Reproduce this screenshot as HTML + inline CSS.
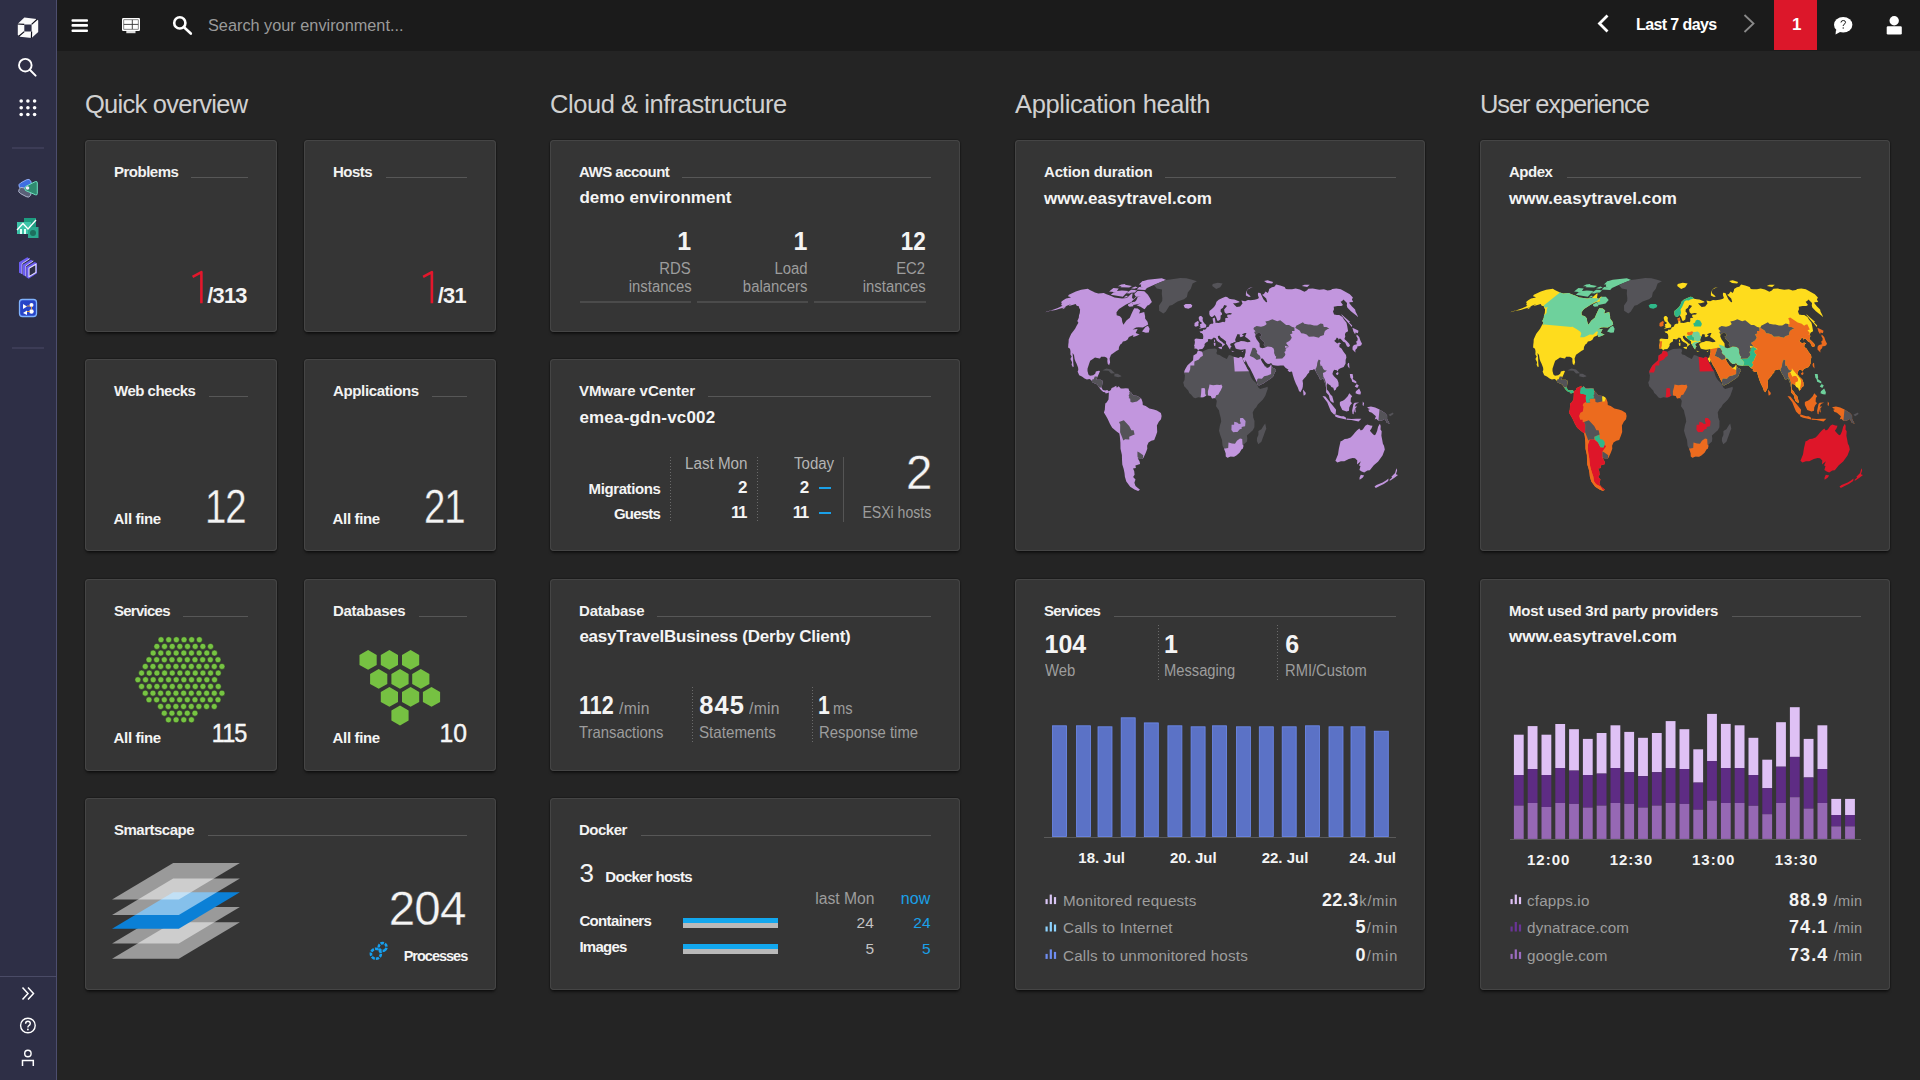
<!DOCTYPE html>
<html><head><meta charset="utf-8">
<style>
*{box-sizing:border-box}
html,body{margin:0;padding:0}
body{width:1920px;height:1080px;overflow:hidden;position:relative;background:#242424;font-family:"Liberation Sans",sans-serif;color:#fff}
.a{position:absolute;white-space:nowrap}
.x{position:absolute;white-space:nowrap;line-height:1}
#sb{position:absolute;left:0;top:0;width:57px;height:1080px;background:#2e2f46;border-right:1px solid #4d4e6e}
#tb{position:absolute;left:57px;top:0;width:1863px;height:51px;background:#1b1b1b}
.h{position:absolute;top:92.4px;font-size:25.5px;line-height:25.5px;color:#d0d0d0;letter-spacing:-0.7px}
.card{position:absolute;background:#353535;border-radius:4px;box-shadow:inset 0 0 0 1px #454545,0 0 1px 1px rgba(0,0,0,.22),0 3px 3px -1px rgba(0,0,0,.5)}
.r1{top:140px}.r2{top:359px}.r3{top:579px}.r4{top:798px}
.cA{left:85px;width:192px}.cB{left:304px;width:192px}.cC{left:550px;width:410px}.cD{left:1015px;width:410px}.cE{left:1480px;width:410px}
.s{height:192px}
.t{position:absolute;left:29px;top:24px;font-size:15px;line-height:15px;font-weight:bold;letter-spacing:-0.5px;color:#f2f2f2}
.ln{position:absolute;height:1px;top:37px;right:29px;background:#575757}
</style></head><body>
<div id="sb">
<svg class="a" style="left:0;top:0" width="56" height="1080" viewBox="0 0 56 1080">
 <!-- logo -->
 <path d="M24.4 17.6 L36.5 19.0 L38.2 20.4 L38.2 32.1 L31.6 37.9 L20 36.7 L17.8 35.1 L17.8 23.8 Z M24.3 24.4 L24.3 31.6 L31.6 31.6 L31.6 24.4 Z" fill="#fafafa" fill-rule="evenodd"/>
 <path d="M17.5 24.0 L24.3 24.4 M31.6 24.4 L37.2 19.2 M31.6 31.6 L31.4 38 M24.3 31.6 L18.8 36.2" stroke="#0d0d1a" stroke-width="1.2" fill="none"/>
 <!-- search -->
 <circle cx="25.3" cy="65.2" r="6.3" stroke="#fff" stroke-width="1.9" fill="none"/>
 <path d="M29.8 69.8 L35.6 75.6" stroke="#fff" stroke-width="2" stroke-linecap="round"/>
 <!-- dots -->
 <g fill="#fff"><circle cx="21.2" cy="101" r="1.8"/><circle cx="27.9" cy="101" r="1.8"/><circle cx="34.6" cy="101" r="1.8"/><circle cx="21.2" cy="107.8" r="1.8"/><circle cx="27.9" cy="107.8" r="1.8"/><circle cx="34.6" cy="107.8" r="1.8"/><circle cx="21.2" cy="114.5" r="1.8"/><circle cx="27.9" cy="114.5" r="1.8"/><circle cx="34.6" cy="114.5" r="1.8"/></g>
 <rect x="12" y="147.5" width="32" height="1" fill="#4a4b66"/>
 <rect x="12" y="347.5" width="32" height="1" fill="#4a4b66"/>
 <!-- icon1 -->
 <rect x="18.5" y="181" width="13" height="6.5" rx="3.2" transform="rotate(-28 25 184)" fill="#3f6fe0" stroke="#9cb7ff" stroke-width="0.8"/>
 <rect x="18.5" y="189" width="13" height="6.5" rx="3.2" transform="rotate(28 25 192)" fill="#5a6078" stroke="#b9bfd8" stroke-width="0.8"/>
 <path d="M25.5 186.5 L35.5 181.5 Q37.3 181 37.3 183 L37.3 193.5 Q37.3 195.5 35.5 194.8 L25.5 190.5 Q24 188.5 25.5 186.5Z" fill="#2f8a70" stroke="#6fe0c0" stroke-width="1"/>
 <circle cx="27.5" cy="188" r="1.8" fill="#f3e9ff"/>
 <!-- icon2 -->
 <rect x="24" y="218" width="12" height="12" fill="#1d9c80"/>
 <rect x="17" y="222" width="14" height="12" fill="#3cc3a8"/>
 <rect x="28" y="227" width="10.5" height="11" fill="#2aa88e"/>
 <path d="M17 230 L23 223.5 L28 229 L36 220" stroke="#fff" stroke-width="1.3" fill="none"/>
 <rect x="20" y="229" width="2" height="5" fill="#dffff6"/><rect x="24" y="229" width="2" height="5" fill="#dffff6"/>
 <circle cx="33" cy="233" r="3" fill="#1d6e5e"/>
 <!-- icon3 -->
 <path d="M19 262.3 L27.3 257.3 L29.7 258.7 L22 263.7 L22 274 L19 272.7Z" fill="#6b5cf2"/>
 <path d="M22 263.7 L29.7 258.7" stroke="#e3ddff" stroke-width="0.8"/><path d="M22 263.7 L22 274" stroke="#cfc7ff" stroke-width="0.8"/>
 <path d="M22.7 264.7 L31 259.7 L33.3 261 L25.7 266 L25.7 276.3 L22.7 275Z" fill="#6b5cf2"/>
 <path d="M25.7 266 L33.3 261" stroke="#e3ddff" stroke-width="0.8"/><path d="M25.7 266 L25.7 276.3" stroke="#cfc7ff" stroke-width="0.8"/>
 <path d="M26.3 267 L34.7 262 L37 263.3 L37 273.3 L28.7 278.7 L26.3 277.3Z" fill="#6b5cf2"/>
 <path d="M29 268.3 L35.9 264.2 L35.9 272.5 L29 276.6Z" fill="#2e2f46" stroke="#e6e2ff" stroke-width="1.1"/>
 <!-- icon4 -->
 <rect x="19.5" y="299.5" width="17" height="17" rx="3" fill="#2744c8" stroke="#7fb2ff" stroke-width="1.3"/>
 <path d="M23 304 L27 306.5 L23 309Z M23 313 L27 310.5 L27 315Z" fill="#fff"/>
 <circle cx="31.5" cy="305" r="2" fill="#fff"/><circle cx="31.5" cy="311.5" r="2.2" fill="#fff"/>
 <path d="M27 306 L30 306 M27 311.5 L30 311.5 M31.5 306.5 L31.5 309.5" stroke="#f0a030" stroke-width="0.9"/>
 <!-- bottom -->
 <rect x="0" y="976" width="56" height="1" fill="#4a4b66"/>
 <path d="M22.5 987.5 L28 993.5 L22.5 999.5 M28 987.5 L33.5 993.5 L28 999.5" stroke="#fff" stroke-width="1.5" fill="none"/>
 <circle cx="27.9" cy="1025.5" r="7.3" stroke="#fff" stroke-width="1.4" fill="none"/>
 <path d="M25.6 1023.8 Q25.6 1021.3 27.9 1021.3 Q30.3 1021.3 30.3 1023.6 Q30.3 1025 28.6 1025.8 Q27.9 1026.3 27.9 1027.5" stroke="#fff" stroke-width="1.4" fill="none"/>
 <circle cx="27.9" cy="1029.5" r="0.9" fill="#fff"/>
 <circle cx="27.9" cy="1053.5" r="3.2" stroke="#fff" stroke-width="1.4" fill="none"/>
 <path d="M22.5 1066 L22.5 1060.5 L33.3 1060.5 L33.3 1066" stroke="#fff" stroke-width="1.5" fill="none"/>
</svg>
</div>
<div id="tb">
<svg class="a" style="left:0;top:0" width="1863" height="50" viewBox="57 0 1863 50">
 <g fill="#fff"><rect x="71.5" y="19.2" width="16.5" height="2.6" rx="1"/><rect x="71.5" y="24.1" width="16.5" height="2.6" rx="1"/><rect x="71.5" y="29.4" width="16.5" height="2.6" rx="1"/></g>
 <rect x="122" y="18" width="18" height="13" rx="1.2" fill="#fff"/>
 <rect x="123.8" y="19.8" width="14.4" height="9.4" fill="none" stroke="#3a3a3a" stroke-width="0.6"/>
 <path d="M123.8 24.4 L138.2 24.4 M132.3 19.8 L132.3 29.2" stroke="#333" stroke-width="0.9"/>
 <rect x="126.3" y="31" width="9.2" height="2.2" fill="#ddd"/>
 <circle cx="179.8" cy="22.9" r="5.6" stroke="#fff" stroke-width="2.6" fill="none"/>
 <path d="M184 27.3 L190.8 33.5" stroke="#fff" stroke-width="2.6" stroke-linecap="round"/>
 <path d="M1607.5 15.5 L1599.5 23.5 L1607.5 31.5" stroke="#fff" stroke-width="2.8" fill="none"/>
 <path d="M1744.5 15 L1753.5 23.5 L1744.5 32" stroke="#8a8a8a" stroke-width="1.8" fill="none"/>
 <rect x="1774" y="0" width="43" height="50" fill="#dc172a"/>
 <ellipse cx="1843.2" cy="24.7" rx="9.2" ry="7.8" fill="#fff"/>
 <path d="M1836 30 L1835.5 34.5 L1841 31.5Z" fill="#fff"/>
 <path d="M1841 22.5 Q1841 20.5 1843.3 20.5 Q1845.5 20.5 1845.5 22.3 Q1845.5 23.6 1844 24.3 Q1843.2 24.8 1843.2 26" stroke="#1b1b1b" stroke-width="1" fill="none"/>
 <circle cx="1843.2" cy="28" r="0.7" fill="#1b1b1b"/>
 <circle cx="1894.2" cy="20.8" r="4.7" fill="#fff"/>
 <rect x="1886.7" y="26.3" width="15.1" height="8.3" rx="1.3" fill="#fff"/>
</svg>
<div class="a" style="left:151px;top:16.8px;font-size:16.3px;line-height:16px;color:#9a9a9a">Search your environment...</div>
<div class="a" style="left:1579px;top:17px;font-size:16px;line-height:16px;font-weight:bold;color:#fff;letter-spacing:-0.6px">Last 7 days</div>
<div class="a" style="left:1735px;top:16px;font-size:17px;line-height:17px;font-weight:bold;color:#fff">1</div>
</div>

<div class="h" style="left:85px;letter-spacing:-0.75px">Quick overview</div>
<div class="h" style="left:550px;letter-spacing:-0.45px">Cloud &amp; infrastructure</div>
<div class="h" style="left:1015px;letter-spacing:-0.35px">Application health</div>
<div class="h" style="left:1480px;letter-spacing:-1.13px">User experience</div>

<div class="card cA r1 s"><div class="t">Problems</div><div class="ln" style="left:106px"></div></div>
<div class="card cB r1 s"><div class="t">Hosts</div><div class="ln" style="left:82px"></div></div>
<div class="card cA r2 s"><div class="t">Web checks</div><div class="ln" style="left:124px"></div></div>
<div class="card cB r2 s"><div class="t" style="letter-spacing:-0.35px">Applications</div><div class="ln" style="left:128px"></div></div>
<div class="card cA r3 s"><div class="t" style="letter-spacing:-0.75px">Services</div><div class="ln" style="left:98px"></div></div>
<div class="card cB r3 s"><div class="t" style="letter-spacing:-0.3px">Databases</div><div class="ln" style="left:115px"></div></div>
<div class="card cA r4 s" style="width:411px"><div class="t">Smartscape</div><div class="ln" style="left:123px"></div></div>

<div class="card cC r1 s"><div class="t">AWS account</div><div class="ln" style="left:132px"></div></div>
<div class="card cC r2 s"><div class="t" style="letter-spacing:-0.04px">VMware vCenter</div><div class="ln" style="left:158px"></div></div>
<div class="card cC r3 s"><div class="t" style="letter-spacing:-0.15px">Database</div><div class="ln" style="left:107px"></div></div>
<div class="card cC r4 s"><div class="t">Docker</div><div class="ln" style="left:91px"></div></div>

<div class="card cD r1" style="height:411px"><div class="t" style="letter-spacing:-0.15px">Action duration</div><div class="ln" style="left:150px"></div></div>
<div class="card cD r3" style="height:411px"><div class="t" style="letter-spacing:-0.7px">Services</div><div class="ln" style="left:99px"></div></div>
<div class="card cE r1" style="height:411px"><div class="t">Apdex</div><div class="ln" style="left:87px"></div></div>
<div class="card cE r3" style="height:411px"><div class="t" style="letter-spacing:-0.2px">Most used 3rd party providers</div><div class="ln" style="left:252px"></div></div>

<!--CONTENT_START--><div class="x" style="top:285.0px;font-size:21.8px;color:#f4f4f4;font-weight:bold;letter-spacing:-0.75px;left:207.3px;">/313</div>
<div class="x" style="top:285.0px;font-size:21.8px;color:#f4f4f4;font-weight:bold;letter-spacing:-0.75px;left:437.8px;">/31</div>
<div class="x" style="top:510.9px;font-size:15px;color:#f4f4f4;font-weight:bold;letter-spacing:-0.35px;left:113.6px;">All fine</div>
<div class="x" style="top:483.0px;font-size:48px;color:#f4f4f4;letter-spacing:-1.5px;right:1673.5px;transform:scaleX(0.8);transform-origin:100% 0;margin-right:1.5px;-webkit-text-stroke:0.35px #353535;">12</div>
<div class="x" style="top:510.9px;font-size:15px;color:#f4f4f4;font-weight:bold;letter-spacing:-0.35px;left:332.6px;">All fine</div>
<div class="x" style="top:483.0px;font-size:48px;color:#f4f4f4;letter-spacing:-1.5px;right:1454.0px;transform:scaleX(0.8);transform-origin:100% 0;margin-right:1.5px;-webkit-text-stroke:0.35px #353535;">21</div>
<div class="x" style="top:729.5px;font-size:15px;color:#f4f4f4;font-weight:bold;letter-spacing:-0.35px;left:113.6px;">All fine</div>
<div class="x" style="top:720.2px;font-size:26px;color:#f4f4f4;letter-spacing:-1px;right:1672.5px;transform:scaleX(0.9);transform-origin:100% 0;margin-right:1px;-webkit-text-stroke:0.4px #fff;">115</div>
<div class="x" style="top:729.5px;font-size:15px;color:#f4f4f4;font-weight:bold;letter-spacing:-0.35px;left:332.6px;">All fine</div>
<div class="x" style="top:720.2px;font-size:26px;color:#f4f4f4;right:1453.5px;transform:scaleX(0.95);transform-origin:100% 0;-webkit-text-stroke:0.4px #fff;">10</div>
<div class="x" style="top:885.4px;font-size:47.5px;color:#f4f4f4;letter-spacing:-0.8px;right:1453.7px;margin-right:0.8px;-webkit-text-stroke:0.35px #353535;">204</div>
<div class="x" style="top:948.6px;font-size:14.5px;color:#f4f4f4;font-weight:bold;letter-spacing:-1.0px;left:403.7px;">Processes</div>
<div class="x" style="top:189.4px;font-size:17px;color:#f4f4f4;font-weight:bold;left:579.4px;">demo environment</div>
<div class="x" style="top:229.1px;font-size:25px;color:#f4f4f4;font-weight:bold;right:1228.8px;">1</div>
<div class="x" style="top:260.9px;font-size:16px;color:#9d9d9d;right:1228.8px;transform:scaleX(0.93);transform-origin:100% 0;">RDS</div>
<div class="x" style="top:279.2px;font-size:16px;color:#9d9d9d;right:1228.8px;transform:scaleX(0.93);transform-origin:100% 0;">instances</div>
<div class="x" style="top:229.1px;font-size:25px;color:#f4f4f4;font-weight:bold;right:1112.6px;">1</div>
<div class="x" style="top:260.9px;font-size:16px;color:#9d9d9d;right:1112.6px;transform:scaleX(0.93);transform-origin:100% 0;">Load</div>
<div class="x" style="top:279.2px;font-size:16px;color:#9d9d9d;right:1112.6px;transform:scaleX(0.93);transform-origin:100% 0;">balancers</div>
<div class="x" style="top:229.1px;font-size:25px;color:#f4f4f4;font-weight:bold;right:994.6px;transform:scaleX(0.9);transform-origin:100% 0;">12</div>
<div class="x" style="top:260.9px;font-size:16px;color:#9d9d9d;right:994.6px;transform:scaleX(0.93);transform-origin:100% 0;">EC2</div>
<div class="x" style="top:279.2px;font-size:16px;color:#9d9d9d;right:994.6px;transform:scaleX(0.93);transform-origin:100% 0;">instances</div>
<div class="x" style="left:580.0px;top:301.0px;width:111.0px;height:2.0px;background:#4b4b4b;"></div>
<div class="x" style="left:697.0px;top:301.0px;width:111.0px;height:2.0px;background:#4b4b4b;"></div>
<div class="x" style="left:814.0px;top:301.0px;width:112.0px;height:2.0px;background:#4b4b4b;"></div>
<div class="x" style="top:408.9px;font-size:17px;color:#f4f4f4;font-weight:bold;letter-spacing:0.2px;left:579.4px;">emea-gdn-vc002</div>
<div class="x" style="top:455.7px;font-size:16px;color:#b4b4b4;left:685.3px;transform:scaleX(0.95);transform-origin:0 0;">Last Mon</div>
<div class="x" style="top:455.7px;font-size:16px;color:#b4b4b4;left:793.9px;transform:scaleX(0.94);transform-origin:0 0;">Today</div>
<div class="x" style="top:481.0px;font-size:15px;color:#f4f4f4;font-weight:bold;letter-spacing:-0.4px;right:1259.2px;margin-right:0.4px;">Migrations</div>
<div class="x" style="top:505.7px;font-size:15px;color:#f4f4f4;font-weight:bold;letter-spacing:-0.8px;right:1259.2px;margin-right:0.8px;">Guests</div>
<div class="x" style="top:479.3px;font-size:17px;color:#f4f4f4;font-weight:bold;right:1172.6px;">2</div>
<div class="x" style="top:504.0px;font-size:17px;color:#f4f4f4;font-weight:bold;letter-spacing:-1.5px;right:1172.6px;margin-right:1.5px;">11</div>
<div class="x" style="top:479.3px;font-size:17px;color:#f4f4f4;font-weight:bold;right:1110.8px;">2</div>
<div class="x" style="top:504.0px;font-size:17px;color:#f4f4f4;font-weight:bold;letter-spacing:-1.5px;right:1110.8px;margin-right:1.5px;">11</div>
<div class="x" style="left:819.0px;top:486.6px;width:11.6px;height:2.2px;background:#1aa0e8;"></div>
<div class="x" style="left:819.0px;top:511.8px;width:11.6px;height:2.2px;background:#1aa0e8;"></div>
<div class="x" style="left:670.0px;top:457.0px;width:1px;height:65.0px;background:repeating-linear-gradient(#6a6a6a 0 1px,transparent 1px 3px)"></div>
<div class="x" style="left:756.5px;top:457.0px;width:1px;height:65.0px;background:repeating-linear-gradient(#6a6a6a 0 1px,transparent 1px 3px)"></div>
<div class="x" style="left:842.5px;top:457.0px;width:1.0px;height:65.0px;background:#555;"></div>
<div class="x" style="top:448.6px;font-size:47.5px;color:#f4f4f4;right:987.7px;-webkit-text-stroke:0.35px #353535;">2</div>
<div class="x" style="top:504.9px;font-size:16px;color:#9d9d9d;right:988.6px;transform:scaleX(0.88);transform-origin:100% 0;">ESXi hosts</div>
<div class="x" style="top:627.8px;font-size:17px;color:#f4f4f4;font-weight:bold;letter-spacing:-0.23px;left:579.4px;">easyTravelBusiness (Derby Client)</div>
<div class="x" style="top:693.2px;font-size:25px;color:#f4f4f4;font-weight:bold;left:579.4px;transform:scaleX(0.86);transform-origin:0 0;">112</div>
<div class="x" style="top:700.9px;font-size:16px;color:#9d9d9d;letter-spacing:0.3px;left:619.0px;transform:scaleX(0.98);transform-origin:0 0;">/min</div>
<div class="x" style="top:724.4px;font-size:16.5px;color:#9d9d9d;left:579.4px;transform:scaleX(0.9);transform-origin:0 0;">Transactions</div>
<div class="x" style="top:692.8px;font-size:25.5px;color:#f4f4f4;font-weight:bold;letter-spacing:1.1px;left:699.3px;">845</div>
<div class="x" style="top:700.9px;font-size:16px;color:#9d9d9d;letter-spacing:0.3px;left:749.0px;transform:scaleX(0.98);transform-origin:0 0;">/min</div>
<div class="x" style="top:724.4px;font-size:16.5px;color:#9d9d9d;left:699.3px;transform:scaleX(0.92);transform-origin:0 0;">Statements</div>
<div class="x" style="top:693.2px;font-size:25px;color:#f4f4f4;font-weight:bold;left:818.4px;transform:scaleX(0.85);transform-origin:0 0;">1</div>
<div class="x" style="top:700.9px;font-size:16px;color:#9d9d9d;left:833.3px;transform:scaleX(0.92);transform-origin:0 0;">ms</div>
<div class="x" style="top:724.4px;font-size:16.5px;color:#9d9d9d;left:819.0px;transform:scaleX(0.9);transform-origin:0 0;">Response time</div>
<div class="x" style="left:692.4px;top:687.0px;width:1px;height:55.0px;background:repeating-linear-gradient(#6a6a6a 0 1px,transparent 1px 3px)"></div>
<div class="x" style="left:812.0px;top:687.0px;width:1px;height:55.0px;background:repeating-linear-gradient(#6a6a6a 0 1px,transparent 1px 3px)"></div>
<div class="x" style="top:859.7px;font-size:26px;color:#f4f4f4;left:579.4px;">3</div>
<div class="x" style="top:869.0px;font-size:15px;color:#f4f4f4;font-weight:bold;letter-spacing:-0.7px;left:605.3px;">Docker hosts</div>
<div class="x" style="top:891.1px;font-size:16px;color:#9d9d9d;right:1045.4px;transform:scaleX(0.98);transform-origin:100% 0;">last Mon</div>
<div class="x" style="top:891.1px;font-size:16px;color:#1aa0e8;right:989.8px;">now</div>
<div class="x" style="top:913.0px;font-size:15px;color:#f4f4f4;font-weight:bold;letter-spacing:-0.65px;left:579.4px;">Containers</div>
<div class="x" style="top:938.8px;font-size:15px;color:#f4f4f4;font-weight:bold;letter-spacing:-0.75px;left:579.4px;">Images</div>
<div class="x" style="left:682.5px;top:918.3px;width:95.1px;height:4.6px;background:#12a7ee;"></div>
<div class="x" style="left:682.5px;top:922.9px;width:95.1px;height:5.0px;background:#b9b9b9;"></div>
<div class="x" style="left:682.5px;top:944.3px;width:95.1px;height:4.6px;background:#12a7ee;"></div>
<div class="x" style="left:682.5px;top:948.9px;width:95.1px;height:5.0px;background:#b9b9b9;"></div>
<div class="x" style="top:915.1px;font-size:15.5px;color:#c4c4c4;letter-spacing:0.3px;right:1046.0px;margin-right:-0.3px;">24</div>
<div class="x" style="top:915.1px;font-size:15.5px;color:#1aa0e8;letter-spacing:0.3px;right:989.3px;margin-right:-0.3px;">24</div>
<div class="x" style="top:941.4px;font-size:15.5px;color:#c4c4c4;right:1046.0px;">5</div>
<div class="x" style="top:941.4px;font-size:15.5px;color:#1aa0e8;right:989.3px;">5</div>
<div class="x" style="top:189.6px;font-size:17px;color:#f4f4f4;font-weight:bold;letter-spacing:0.08px;left:1044.0px;">www.easytravel.com</div>
<div class="x" style="top:189.6px;font-size:17px;color:#f4f4f4;font-weight:bold;letter-spacing:0.08px;left:1509.0px;">www.easytravel.com</div>
<div class="x" style="top:632.3px;font-size:25px;color:#f4f4f4;font-weight:bold;left:1044.5px;">104</div>
<div class="x" style="top:632.3px;font-size:25px;color:#f4f4f4;font-weight:bold;left:1163.9px;">1</div>
<div class="x" style="top:632.3px;font-size:25px;color:#f4f4f4;font-weight:bold;left:1285.3px;">6</div>
<div class="x" style="top:662.5px;font-size:16px;color:#9d9d9d;left:1044.5px;transform:scaleX(0.93);transform-origin:0 0;">Web</div>
<div class="x" style="top:662.5px;font-size:16px;color:#9d9d9d;left:1164.0px;transform:scaleX(0.92);transform-origin:0 0;">Messaging</div>
<div class="x" style="top:662.5px;font-size:16px;color:#9d9d9d;left:1285.0px;transform:scaleX(0.92);transform-origin:0 0;">RMI/Custom</div>
<div class="x" style="left:1157.8px;top:625.0px;width:1px;height:55.0px;background:repeating-linear-gradient(#6a6a6a 0 1px,transparent 1px 3px)"></div>
<div class="x" style="left:1276.7px;top:625.0px;width:1px;height:55.0px;background:repeating-linear-gradient(#6a6a6a 0 1px,transparent 1px 3px)"></div>
<div class="x" style="left:1044.0px;top:836.5px;width:352.0px;height:1.5px;background:#5a5a5a;"></div>
<div class="x" style="top:849.8px;font-size:15px;color:#f4f4f4;font-weight:bold;left:1078.3px;">18. Jul</div>
<div class="x" style="top:849.8px;font-size:15px;color:#f4f4f4;font-weight:bold;left:1170.0px;">20. Jul</div>
<div class="x" style="top:849.8px;font-size:15px;color:#f4f4f4;font-weight:bold;left:1261.7px;">22. Jul</div>
<div class="x" style="top:849.8px;font-size:15px;color:#f4f4f4;font-weight:bold;left:1349.3px;">24. Jul</div>
<div class="x" style="top:893.0px;font-size:15.5px;color:#9d9d9d;letter-spacing:0.2px;left:1062.5px;transform:scaleX(0.98);transform-origin:0 0;">Monitored requests</div>
<div class="x" style="top:920.4px;font-size:15.5px;color:#9d9d9d;letter-spacing:0.2px;left:1062.5px;transform:scaleX(0.98);transform-origin:0 0;">Calls to Internet</div>
<div class="x" style="top:947.8px;font-size:15.5px;color:#9d9d9d;letter-spacing:0.2px;left:1062.5px;transform:scaleX(0.98);transform-origin:0 0;">Calls to unmonitored hosts</div>
<div class="x" style="top:890.9px;font-size:18px;color:#f4f4f4;font-weight:bold;letter-spacing:0.4px;right:561.8px;margin-right:-0.4px;">22.3</div>
<div class="x" style="top:893.8px;font-size:14.5px;color:#9d9d9d;letter-spacing:0.8px;right:522.8px;margin-right:-0.8px;">k/min</div>
<div class="x" style="top:918.4px;font-size:18px;color:#f4f4f4;font-weight:bold;right:554.4px;">5</div>
<div class="x" style="top:921.3px;font-size:14.5px;color:#9d9d9d;letter-spacing:1.0px;right:522.8px;margin-right:-1.0px;">/min</div>
<div class="x" style="top:945.7px;font-size:18px;color:#f4f4f4;font-weight:bold;right:554.4px;">0</div>
<div class="x" style="top:948.6px;font-size:14.5px;color:#9d9d9d;letter-spacing:1.0px;right:522.8px;margin-right:-1.0px;">/min</div>
<div class="x" style="top:628.1px;font-size:17px;color:#f4f4f4;font-weight:bold;letter-spacing:0.08px;left:1509.0px;">www.easytravel.com</div>
<div class="x" style="left:1509.5px;top:838.6px;width:351.0px;height:1.5px;background:#5a5a5a;"></div>
<div class="x" style="top:851.9px;font-size:15px;color:#f4f4f4;font-weight:bold;letter-spacing:1.0px;left:1527.0px;">12:00</div>
<div class="x" style="top:851.9px;font-size:15px;color:#f4f4f4;font-weight:bold;letter-spacing:1.0px;left:1609.7px;">12:30</div>
<div class="x" style="top:851.9px;font-size:15px;color:#f4f4f4;font-weight:bold;letter-spacing:1.0px;left:1692.0px;">13:00</div>
<div class="x" style="top:851.9px;font-size:15px;color:#f4f4f4;font-weight:bold;letter-spacing:1.0px;left:1774.7px;">13:30</div>
<div class="x" style="top:893.0px;font-size:15.5px;color:#9d9d9d;letter-spacing:0.2px;left:1527.0px;transform:scaleX(0.98);transform-origin:0 0;">cfapps.io</div>
<div class="x" style="top:890.9px;font-size:18px;color:#f4f4f4;font-weight:bold;letter-spacing:1.1px;right:92.7px;margin-right:-1.1px;">88.9</div>
<div class="x" style="top:893.8px;font-size:14.5px;color:#9d9d9d;letter-spacing:0.25px;right:58.0px;margin-right:-0.25px;">/min</div>
<div class="x" style="top:920.4px;font-size:15.5px;color:#9d9d9d;letter-spacing:0.2px;left:1527.0px;transform:scaleX(0.98);transform-origin:0 0;">dynatrace.com</div>
<div class="x" style="top:918.3px;font-size:18px;color:#f4f4f4;font-weight:bold;letter-spacing:1.1px;right:92.7px;margin-right:-1.1px;">74.1</div>
<div class="x" style="top:921.2px;font-size:14.5px;color:#9d9d9d;letter-spacing:0.25px;right:58.0px;margin-right:-0.25px;">/min</div>
<div class="x" style="top:947.8px;font-size:15.5px;color:#9d9d9d;letter-spacing:0.2px;left:1527.0px;transform:scaleX(0.98);transform-origin:0 0;">google.com</div>
<div class="x" style="top:945.7px;font-size:18px;color:#f4f4f4;font-weight:bold;letter-spacing:1.1px;right:92.7px;margin-right:-1.1px;">73.4</div>
<div class="x" style="top:948.6px;font-size:14.5px;color:#9d9d9d;letter-spacing:0.25px;right:58.0px;margin-right:-0.25px;">/min</div>
<svg class="x" style="left:0;top:0" width="1920" height="1080" viewBox="0 0 1920 1080"><path d="M192.6 276.8 L201.4 272.2 L201.4 303.2" stroke="#e3172c" stroke-width="2.6" fill="none" stroke-linejoin="round"/><path d="M423.1 276.8 L431.9 272.2 L431.9 303.2" stroke="#e3172c" stroke-width="2.6" fill="none" stroke-linejoin="round"/><rect x="1052.6" y="725.8" width="14" height="110.8" fill="#5b72c6" stroke="#6e8bf0" stroke-width="0.8"/><rect x="1076.5" y="725.8" width="14" height="110.8" fill="#5b72c6" stroke="#6e8bf0" stroke-width="0.8"/><rect x="1098.0" y="726.8" width="14" height="109.8" fill="#5b72c6" stroke="#6e8bf0" stroke-width="0.8"/><rect x="1121.2" y="717.8" width="14" height="118.8" fill="#5b72c6" stroke="#6e8bf0" stroke-width="0.8"/><rect x="1144.3" y="722.9" width="14" height="113.7" fill="#5b72c6" stroke="#6e8bf0" stroke-width="0.8"/><rect x="1167.9" y="725.8" width="14" height="110.8" fill="#5b72c6" stroke="#6e8bf0" stroke-width="0.8"/><rect x="1191.1" y="726.8" width="14" height="109.8" fill="#5b72c6" stroke="#6e8bf0" stroke-width="0.8"/><rect x="1212.6" y="725.8" width="14" height="110.8" fill="#5b72c6" stroke="#6e8bf0" stroke-width="0.8"/><rect x="1236.4" y="726.8" width="14" height="109.8" fill="#5b72c6" stroke="#6e8bf0" stroke-width="0.8"/><rect x="1259.3" y="726.8" width="14" height="109.8" fill="#5b72c6" stroke="#6e8bf0" stroke-width="0.8"/><rect x="1282.2" y="726.8" width="14" height="109.8" fill="#5b72c6" stroke="#6e8bf0" stroke-width="0.8"/><rect x="1305.4" y="725.8" width="14" height="110.8" fill="#5b72c6" stroke="#6e8bf0" stroke-width="0.8"/><rect x="1329.0" y="726.8" width="14" height="109.8" fill="#5b72c6" stroke="#6e8bf0" stroke-width="0.8"/><rect x="1351.0" y="726.8" width="14" height="109.8" fill="#5b72c6" stroke="#6e8bf0" stroke-width="0.8"/><rect x="1374.3" y="731.2" width="14" height="105.4" fill="#5b72c6" stroke="#6e8bf0" stroke-width="0.8"/><g fill="#d9c6f5"><rect x="1045.5" y="899.1" width="2.2" height="5"/><rect x="1049.7" y="894.6" width="2.2" height="9.5"/><rect x="1053.9" y="897.1" width="2.2" height="7"/></g><g fill="#8dd3ff"><rect x="1045.5" y="926.5" width="2.2" height="5"/><rect x="1049.7" y="922.0" width="2.2" height="9.5"/><rect x="1053.9" y="924.5" width="2.2" height="7"/></g><g fill="#6f8df2"><rect x="1045.5" y="953.9" width="2.2" height="5"/><rect x="1049.7" y="949.4" width="2.2" height="9.5"/><rect x="1053.9" y="951.9" width="2.2" height="7"/></g><rect x="1513.9" y="734.7" width="9.8" height="40.3" fill="#dfc1f5"/><rect x="1513.9" y="775.0" width="9.8" height="30.6" fill="#5e2c84"/><rect x="1513.9" y="805.6" width="9.8" height="33.3" fill="#9668b4"/><rect x="1527.7" y="726.1" width="9.8" height="42.9" fill="#dfc1f5"/><rect x="1527.7" y="769.0" width="9.8" height="34.0" fill="#5e2c84"/><rect x="1527.7" y="803.0" width="9.8" height="35.9" fill="#9668b4"/><rect x="1541.5" y="734.7" width="9.8" height="40.3" fill="#dfc1f5"/><rect x="1541.5" y="775.0" width="9.8" height="32.0" fill="#5e2c84"/><rect x="1541.5" y="807.0" width="9.8" height="31.9" fill="#9668b4"/><rect x="1555.3" y="724.0" width="9.8" height="44.0" fill="#dfc1f5"/><rect x="1555.3" y="768.0" width="9.8" height="35.0" fill="#5e2c84"/><rect x="1555.3" y="803.0" width="9.8" height="35.9" fill="#9668b4"/><rect x="1569.1" y="729.2" width="9.8" height="41.4" fill="#dfc1f5"/><rect x="1569.1" y="770.6" width="9.8" height="33.3" fill="#5e2c84"/><rect x="1569.1" y="803.9" width="9.8" height="35.0" fill="#9668b4"/><rect x="1582.9" y="738.9" width="9.8" height="36.1" fill="#dfc1f5"/><rect x="1582.9" y="775.0" width="9.8" height="32.6" fill="#5e2c84"/><rect x="1582.9" y="807.6" width="9.8" height="31.3" fill="#9668b4"/><rect x="1596.7" y="733.0" width="9.8" height="40.6" fill="#dfc1f5"/><rect x="1596.7" y="773.6" width="9.8" height="32.0" fill="#5e2c84"/><rect x="1596.7" y="805.6" width="9.8" height="33.3" fill="#9668b4"/><rect x="1610.5" y="725.3" width="9.8" height="42.7" fill="#dfc1f5"/><rect x="1610.5" y="768.0" width="9.8" height="35.0" fill="#5e2c84"/><rect x="1610.5" y="803.0" width="9.8" height="35.9" fill="#9668b4"/><rect x="1624.3" y="731.9" width="9.8" height="40.3" fill="#dfc1f5"/><rect x="1624.3" y="772.2" width="9.8" height="31.7" fill="#5e2c84"/><rect x="1624.3" y="803.9" width="9.8" height="35.0" fill="#9668b4"/><rect x="1638.1" y="737.8" width="9.8" height="38.3" fill="#dfc1f5"/><rect x="1638.1" y="776.1" width="9.8" height="31.5" fill="#5e2c84"/><rect x="1638.1" y="807.6" width="9.8" height="31.3" fill="#9668b4"/><rect x="1651.9" y="733.0" width="9.8" height="39.2" fill="#dfc1f5"/><rect x="1651.9" y="772.2" width="9.8" height="33.4" fill="#5e2c84"/><rect x="1651.9" y="805.6" width="9.8" height="33.3" fill="#9668b4"/><rect x="1665.7" y="721.1" width="9.8" height="46.9" fill="#dfc1f5"/><rect x="1665.7" y="768.0" width="9.8" height="35.0" fill="#5e2c84"/><rect x="1665.7" y="803.0" width="9.8" height="35.9" fill="#9668b4"/><rect x="1679.5" y="729.2" width="9.8" height="39.8" fill="#dfc1f5"/><rect x="1679.5" y="769.0" width="9.8" height="34.9" fill="#5e2c84"/><rect x="1679.5" y="803.9" width="9.8" height="35.0" fill="#9668b4"/><rect x="1693.3" y="749.3" width="9.8" height="33.3" fill="#dfc1f5"/><rect x="1693.3" y="782.6" width="9.8" height="27.1" fill="#5e2c84"/><rect x="1693.3" y="809.7" width="9.8" height="29.2" fill="#9668b4"/><rect x="1707.1" y="713.9" width="9.8" height="47.2" fill="#dfc1f5"/><rect x="1707.1" y="761.1" width="9.8" height="39.6" fill="#5e2c84"/><rect x="1707.1" y="800.7" width="9.8" height="38.2" fill="#9668b4"/><rect x="1720.9" y="723.9" width="9.8" height="44.1" fill="#dfc1f5"/><rect x="1720.9" y="768.0" width="9.8" height="35.0" fill="#5e2c84"/><rect x="1720.9" y="803.0" width="9.8" height="35.9" fill="#9668b4"/><rect x="1734.7" y="725.3" width="9.8" height="42.7" fill="#dfc1f5"/><rect x="1734.7" y="768.0" width="9.8" height="35.0" fill="#5e2c84"/><rect x="1734.7" y="803.0" width="9.8" height="35.9" fill="#9668b4"/><rect x="1748.5" y="737.8" width="9.8" height="37.2" fill="#dfc1f5"/><rect x="1748.5" y="775.0" width="9.8" height="30.8" fill="#5e2c84"/><rect x="1748.5" y="805.8" width="9.8" height="33.1" fill="#9668b4"/><rect x="1762.3" y="759.7" width="9.8" height="28.5" fill="#dfc1f5"/><rect x="1762.3" y="788.2" width="9.8" height="26.0" fill="#5e2c84"/><rect x="1762.3" y="814.2" width="9.8" height="24.7" fill="#9668b4"/><rect x="1776.1" y="722.2" width="9.8" height="44.5" fill="#dfc1f5"/><rect x="1776.1" y="766.7" width="9.8" height="36.3" fill="#5e2c84"/><rect x="1776.1" y="803.0" width="9.8" height="35.9" fill="#9668b4"/><rect x="1789.9" y="707.2" width="9.8" height="49.7" fill="#dfc1f5"/><rect x="1789.9" y="756.9" width="9.8" height="40.3" fill="#5e2c84"/><rect x="1789.9" y="797.2" width="9.8" height="41.7" fill="#9668b4"/><rect x="1803.7" y="738.9" width="9.8" height="38.6" fill="#dfc1f5"/><rect x="1803.7" y="777.5" width="9.8" height="31.1" fill="#5e2c84"/><rect x="1803.7" y="808.6" width="9.8" height="30.3" fill="#9668b4"/><rect x="1817.5" y="725.3" width="9.8" height="43.7" fill="#dfc1f5"/><rect x="1817.5" y="769.0" width="9.8" height="34.0" fill="#5e2c84"/><rect x="1817.5" y="803.0" width="9.8" height="35.9" fill="#9668b4"/><rect x="1831.3" y="798.9" width="9.8" height="16.1" fill="#dfc1f5"/><rect x="1831.3" y="815.0" width="9.8" height="11.4" fill="#5e2c84"/><rect x="1831.3" y="826.4" width="9.8" height="12.5" fill="#9668b4"/><rect x="1845.1" y="798.9" width="9.8" height="16.1" fill="#dfc1f5"/><rect x="1845.1" y="815.0" width="9.8" height="11.4" fill="#5e2c84"/><rect x="1845.1" y="826.4" width="9.8" height="12.5" fill="#9668b4"/><g fill="#dfc1f5"><rect x="1510.5" y="899.1" width="2.2" height="5"/><rect x="1514.7" y="894.6" width="2.2" height="9.5"/><rect x="1518.9" y="897.1" width="2.2" height="7"/></g><g fill="#6a3496"><rect x="1510.5" y="926.5" width="2.2" height="5"/><rect x="1514.7" y="922.0" width="2.2" height="9.5"/><rect x="1518.9" y="924.5" width="2.2" height="7"/></g><g fill="#9b6cc0"><rect x="1510.5" y="953.9" width="2.2" height="5"/><rect x="1514.7" y="949.4" width="2.2" height="9.5"/><rect x="1518.9" y="951.9" width="2.2" height="7"/></g></svg><svg class="x" style="left:0;top:0" width="1920" height="1080" viewBox="0 0 1920 1080"><g fill="#76c442" stroke="#262626" stroke-width="0.5"><circle cx="161.02" cy="639.72" r="3.0"/><circle cx="168.69" cy="639.72" r="3.0"/><circle cx="176.35" cy="639.72" r="3.0"/><circle cx="184.02" cy="639.72" r="3.0"/><circle cx="191.69" cy="639.72" r="3.0"/><circle cx="199.35" cy="639.72" r="3.0"/><circle cx="156.85" cy="646.40" r="3.0"/><circle cx="164.52" cy="646.40" r="3.0"/><circle cx="172.19" cy="646.40" r="3.0"/><circle cx="179.85" cy="646.40" r="3.0"/><circle cx="187.52" cy="646.40" r="3.0"/><circle cx="195.19" cy="646.40" r="3.0"/><circle cx="202.85" cy="646.40" r="3.0"/><circle cx="210.52" cy="646.40" r="3.0"/><circle cx="153.15" cy="653.07" r="3.0"/><circle cx="160.81" cy="653.07" r="3.0"/><circle cx="168.48" cy="653.07" r="3.0"/><circle cx="176.15" cy="653.07" r="3.0"/><circle cx="183.81" cy="653.07" r="3.0"/><circle cx="191.48" cy="653.07" r="3.0"/><circle cx="199.15" cy="653.07" r="3.0"/><circle cx="206.81" cy="653.07" r="3.0"/><circle cx="214.48" cy="653.07" r="3.0"/><circle cx="148.98" cy="659.75" r="3.0"/><circle cx="156.65" cy="659.75" r="3.0"/><circle cx="164.31" cy="659.75" r="3.0"/><circle cx="171.98" cy="659.75" r="3.0"/><circle cx="179.65" cy="659.75" r="3.0"/><circle cx="187.31" cy="659.75" r="3.0"/><circle cx="194.98" cy="659.75" r="3.0"/><circle cx="202.65" cy="659.75" r="3.0"/><circle cx="210.31" cy="659.75" r="3.0"/><circle cx="217.98" cy="659.75" r="3.0"/><circle cx="145.28" cy="666.43" r="3.0"/><circle cx="152.94" cy="666.43" r="3.0"/><circle cx="160.61" cy="666.43" r="3.0"/><circle cx="168.28" cy="666.43" r="3.0"/><circle cx="175.94" cy="666.43" r="3.0"/><circle cx="183.61" cy="666.43" r="3.0"/><circle cx="191.28" cy="666.43" r="3.0"/><circle cx="198.94" cy="666.43" r="3.0"/><circle cx="206.61" cy="666.43" r="3.0"/><circle cx="214.28" cy="666.43" r="3.0"/><circle cx="221.94" cy="666.43" r="3.0"/><circle cx="141.57" cy="673.10" r="3.0"/><circle cx="149.24" cy="673.10" r="3.0"/><circle cx="156.91" cy="673.10" r="3.0"/><circle cx="164.57" cy="673.10" r="3.0"/><circle cx="172.24" cy="673.10" r="3.0"/><circle cx="179.91" cy="673.10" r="3.0"/><circle cx="187.57" cy="673.10" r="3.0"/><circle cx="195.24" cy="673.10" r="3.0"/><circle cx="202.91" cy="673.10" r="3.0"/><circle cx="210.57" cy="673.10" r="3.0"/><circle cx="218.24" cy="673.10" r="3.0"/><circle cx="137.87" cy="679.78" r="3.0"/><circle cx="145.54" cy="679.78" r="3.0"/><circle cx="153.20" cy="679.78" r="3.0"/><circle cx="160.87" cy="679.78" r="3.0"/><circle cx="168.54" cy="679.78" r="3.0"/><circle cx="176.20" cy="679.78" r="3.0"/><circle cx="183.87" cy="679.78" r="3.0"/><circle cx="191.54" cy="679.78" r="3.0"/><circle cx="199.20" cy="679.78" r="3.0"/><circle cx="206.87" cy="679.78" r="3.0"/><circle cx="214.54" cy="679.78" r="3.0"/><circle cx="141.57" cy="686.45" r="3.0"/><circle cx="149.24" cy="686.45" r="3.0"/><circle cx="156.91" cy="686.45" r="3.0"/><circle cx="164.57" cy="686.45" r="3.0"/><circle cx="172.24" cy="686.45" r="3.0"/><circle cx="179.91" cy="686.45" r="3.0"/><circle cx="187.57" cy="686.45" r="3.0"/><circle cx="195.24" cy="686.45" r="3.0"/><circle cx="202.91" cy="686.45" r="3.0"/><circle cx="210.57" cy="686.45" r="3.0"/><circle cx="218.24" cy="686.45" r="3.0"/><circle cx="145.28" cy="693.13" r="3.0"/><circle cx="152.94" cy="693.13" r="3.0"/><circle cx="160.61" cy="693.13" r="3.0"/><circle cx="168.28" cy="693.13" r="3.0"/><circle cx="175.94" cy="693.13" r="3.0"/><circle cx="183.61" cy="693.13" r="3.0"/><circle cx="191.28" cy="693.13" r="3.0"/><circle cx="198.94" cy="693.13" r="3.0"/><circle cx="206.61" cy="693.13" r="3.0"/><circle cx="214.28" cy="693.13" r="3.0"/><circle cx="221.94" cy="693.13" r="3.0"/><circle cx="148.98" cy="699.81" r="3.0"/><circle cx="156.65" cy="699.81" r="3.0"/><circle cx="164.31" cy="699.81" r="3.0"/><circle cx="171.98" cy="699.81" r="3.0"/><circle cx="179.65" cy="699.81" r="3.0"/><circle cx="187.31" cy="699.81" r="3.0"/><circle cx="194.98" cy="699.81" r="3.0"/><circle cx="202.65" cy="699.81" r="3.0"/><circle cx="210.31" cy="699.81" r="3.0"/><circle cx="217.98" cy="699.81" r="3.0"/><circle cx="160.56" cy="706.48" r="3.0"/><circle cx="168.22" cy="706.48" r="3.0"/><circle cx="175.89" cy="706.48" r="3.0"/><circle cx="183.56" cy="706.48" r="3.0"/><circle cx="191.22" cy="706.48" r="3.0"/><circle cx="198.89" cy="706.48" r="3.0"/><circle cx="206.56" cy="706.48" r="3.0"/><circle cx="214.22" cy="706.48" r="3.0"/><circle cx="164.26" cy="713.16" r="3.0"/><circle cx="171.93" cy="713.16" r="3.0"/><circle cx="179.59" cy="713.16" r="3.0"/><circle cx="187.26" cy="713.16" r="3.0"/><circle cx="194.93" cy="713.16" r="3.0"/><circle cx="168.43" cy="719.83" r="3.0"/><circle cx="176.09" cy="719.83" r="3.0"/><circle cx="183.76" cy="719.83" r="3.0"/><circle cx="191.43" cy="719.83" r="3.0"/></g><path fill="#76c142" d="M368.1 669.8 L359.5 664.9 L359.5 654.9 L368.1 650.0 L376.7 654.9 L376.7 664.9Z M389.4 669.8 L380.8 664.9 L380.8 654.9 L389.4 650.0 L398.0 654.9 L398.0 664.9Z M410.6 669.8 L402.0 664.9 L402.0 654.9 L410.6 650.0 L419.2 654.9 L419.2 664.9Z M378.7 688.8 L370.1 683.9 L370.1 673.9 L378.7 669.0 L387.3 673.9 L387.3 683.9Z M400.0 688.8 L391.4 683.9 L391.4 673.9 L400.0 669.0 L408.6 673.9 L408.6 683.9Z M420.8 688.8 L412.2 683.9 L412.2 673.9 L420.8 669.0 L429.4 673.9 L429.4 683.9Z M389.4 706.8 L380.8 701.9 L380.8 691.9 L389.4 687.0 L398.0 691.9 L398.0 701.9Z M410.6 706.8 L402.0 701.9 L402.0 691.9 L410.6 687.0 L419.2 691.9 L419.2 701.9Z M431.5 706.8 L422.9 701.9 L422.9 691.9 L431.5 687.0 L440.1 691.9 L440.1 701.9Z M400.0 725.4 L391.4 720.5 L391.4 710.5 L400.0 705.6 L408.6 710.5 L408.6 720.5Z"/><path d="M173.2 922.2 L239.9 922.2 L178.8 958.7 L112.1 958.7Z" fill="#ffffff" fill-opacity="0.5"/><path d="M173.2 907.0 L239.9 907.0 L178.8 943.5 L112.1 943.5Z" fill="#ffffff" fill-opacity="0.5"/><path d="M173.2 892.2 L239.9 892.2 L178.8 928.7 L112.1 928.7Z" fill="#0b80d6" fill-opacity="1"/><path d="M173.2 878.4 L239.9 878.4 L178.8 914.9 L112.1 914.9Z" fill="#ffffff" fill-opacity="0.5"/><path d="M173.2 863.1 L239.9 863.1 L178.8 899.6 L112.1 899.6Z" fill="#ffffff" fill-opacity="0.5"/><g fill="none" stroke="#16a0f0" stroke-width="2.6" stroke-dasharray="3.3 1.1"><circle cx="375.9" cy="953.8" r="5.0"/><circle cx="382.6" cy="947.0" r="3.9" transform="rotate(40 382.6 947)"/></g></svg><!--CONTENT_END-->
<!--MAPS_START--><svg class="a" style="left:0;top:0" width="1920" height="1080" viewBox="0 0 1920 1080">
<g><path fill="#c296de" d="M1068.9 294.7 L1075.8 291.5 L1081.2 289.7 L1087.9 288.8 L1089.8 289.9 L1093.0 291.5 L1094.9 292.4 L1098.3 293.5 L1103.8 293.1 L1106.5 294.3 L1110.6 295.7 L1114.5 297.5 L1122.0 298.6 L1126.8 297.9 L1130.0 295.1 L1132.3 293.0 L1132.5 294.5 L1132.0 297.6 L1133.2 299.2 L1136.1 296.6 L1137.7 297.2 L1136.3 300.2 L1134.9 301.7 L1132.1 301.9 L1129.7 302.8 L1125.6 304.8 L1119.0 309.0 L1116.5 312.3 L1116.7 315.2 L1119.9 316.2 L1121.7 318.2 L1122.3 322.1 L1123.4 324.7 L1126.4 320.6 L1129.8 317.7 L1131.4 313.9 L1132.8 310.9 L1134.2 308.2 L1137.7 308.4 L1140.2 310.6 L1139.1 313.6 L1144.2 311.9 L1145.1 316.3 L1145.1 318.6 L1147.5 321.8 L1148.2 324.6 L1145.2 326.3 L1142.8 327.4 L1138.7 327.3 L1136.1 327.4 L1132.6 329.6 L1137.6 329.1 L1136.5 331.3 L1135.7 332.9 L1139.4 334.6 L1140.7 333.9 L1136.3 336.0 L1133.2 337.0 L1133.3 335.1 L1131.7 335.8 L1128.9 336.9 L1127.4 339.8 L1125.4 341.0 L1122.9 341.6 L1121.8 343.5 L1120.3 344.6 L1119.0 346.9 L1118.7 349.8 L1116.7 350.8 L1113.9 352.7 L1111.0 354.8 L1109.6 358.4 L1110.1 362.3 L1109.1 365.2 L1107.7 363.8 L1107.3 361.1 L1107.5 358.8 L1106.4 357.4 L1104.6 356.7 L1101.1 356.7 L1100.0 358.4 L1098.3 358.2 L1095.0 357.6 L1093.6 358.4 L1090.2 360.7 L1089.2 363.4 L1087.5 368.7 L1087.5 371.1 L1088.4 374.4 L1090.0 375.7 L1093.1 375.2 L1095.2 373.8 L1095.9 371.4 L1098.8 370.7 L1100.0 370.9 L1098.8 373.9 L1097.4 377.0 L1096.3 379.7 L1100.9 379.7 L1102.8 381.1 L1102.0 385.9 L1101.5 387.5 L1102.9 389.9 L1105.3 390.5 L1107.2 389.9 L1108.9 391.2 L1108.4 393.1 L1107.6 393.1 L1105.7 393.4 L1105.1 392.3 L1103.3 391.9 L1101.0 389.9 L1099.1 387.4 L1097.2 384.4 L1094.9 383.4 L1092.6 382.5 L1091.1 380.1 L1089.5 378.9 L1086.9 379.6 L1084.6 378.6 L1081.9 376.6 L1079.2 375.2 L1077.6 371.5 L1078.3 369.9 L1078.1 367.8 L1076.6 363.8 L1075.5 361.6 L1074.6 359.0 L1074.0 354.9 L1072.5 353.1 L1073.1 358.1 L1073.3 363.1 L1073.7 366.4 L1072.9 367.2 L1071.6 364.7 L1072.1 362.2 L1070.4 359.1 L1071.7 356.4 L1070.4 354.6 L1070.5 351.3 L1070.0 348.8 L1068.1 347.6 L1068.3 344.4 L1068.6 342.3 L1068.7 339.4 L1070.1 336.2 L1071.3 333.8 L1075.1 328.8 L1076.9 325.3 L1078.4 322.8 L1077.3 321.0 L1078.8 317.8 L1079.0 315.3 L1079.8 312.9 L1080.1 309.5 L1079.2 308.1 L1078.8 306.3 L1076.7 305.7 L1075.7 304.1 L1072.4 305.0 L1069.6 305.7 L1068.5 305.7 L1071.3 303.9 L1066.8 305.7 L1064.4 307.4 L1060.3 308.4 L1055.7 309.9 L1052.5 310.5 L1050.0 310.8 L1054.4 309.3 L1057.8 308.1 L1062.5 305.8 L1061.1 305.0 L1061.8 303.4 L1061.1 302.0 L1063.2 300.2 L1066.1 298.6 L1071.0 297.4 L1069.0 296.6 L1067.9 296.2Z M1050.7 310.4 L1048.5 311.0 L1046.2 311.7 L1045.5 312.3 L1047.8 311.6 L1049.8 311.1Z M1063.1 308.1 L1065.9 307.3 L1064.5 308.3 L1062.3 309.2Z M1144.3 291.2 L1147.9 294.8 L1149.9 298.0 L1151.9 302.0 L1149.0 304.9 L1147.4 305.6 L1144.6 309.3 L1143.2 308.4 L1140.5 306.7 L1136.5 305.2 L1140.6 303.6 L1143.7 300.0 L1140.9 296.7 L1135.5 296.3 L1134.3 293.9 L1137.5 291.1 L1140.8 290.9Z M1110.8 294.8 L1122.8 296.8 L1128.3 291.1 L1121.9 290.5 L1114.8 291.3Z M1140.7 286.8 L1147.0 287.9 L1154.7 284.6 L1166.2 279.9 L1161.8 278.3 L1147.8 279.8 L1141.9 281.6Z M1136.7 289.5 L1145.2 290.1 L1147.4 287.4 L1139.1 286.9Z M1109.1 291.4 L1116.1 292.2 L1118.7 288.6 L1113.4 288.1Z M1120.4 287.3 L1129.2 287.4 L1132.0 286.1 L1123.8 284.6Z M1126.2 293.2 L1129.8 293.5 L1135.3 290.1 L1131.1 289.8Z M1128.2 304.3 L1131.7 302.5 L1133.3 304.7 L1133.2 306.2 L1129.7 306.7 L1128.0 305.8Z M1142.0 331.4 L1145.8 332.8 L1148.8 332.6 L1149.6 328.8 L1148.0 325.7 L1145.5 327.1Z M1123.7 297.6 L1126.4 297.4 L1128.0 296.0 L1126.1 295.8Z M1130.9 292.8 L1134.8 292.4 L1137.1 290.3 L1133.9 290.0Z M1131.1 288.3 L1134.3 288.8 L1137.7 287.6 L1135.4 286.4Z M1138.9 284.4 L1144.8 284.0 L1148.9 280.6 L1142.6 281.0Z M1117.9 286.3 L1124.7 286.2 L1125.2 284.0 L1121.2 284.4Z M1131.6 301.4 L1133.5 305.0 L1140.6 303.6 L1143.7 300.0 L1140.9 296.7 L1136.8 296.7Z M1183.6 305.4 L1185.6 304.1 L1190.8 304.0 L1192.3 305.5 L1191.7 307.2 L1188.4 308.7 L1184.9 308.0Z M1108.9 391.2 L1110.9 390.0 L1111.6 387.9 L1113.6 387.2 L1116.2 385.7 L1116.8 387.7 L1118.6 386.2 L1120.8 388.5 L1123.3 388.4 L1125.8 388.3 L1128.5 388.6 L1129.3 391.0 L1131.1 392.5 L1133.4 395.6 L1136.5 395.8 L1139.6 397.2 L1141.4 398.8 L1142.6 402.2 L1142.8 404.9 L1145.7 406.0 L1149.4 408.6 L1153.8 409.4 L1156.9 410.6 L1160.9 412.9 L1161.6 415.9 L1161.0 419.2 L1158.8 421.8 L1156.9 425.5 L1157.2 432.0 L1155.7 436.3 L1154.2 440.0 L1151.3 440.7 L1148.5 442.6 L1147.1 445.7 L1147.3 448.8 L1145.8 452.7 L1144.2 456.3 L1143.4 458.1 L1141.8 458.9 L1139.4 458.2 L1137.7 458.3 L1139.5 461.3 L1140.1 464.0 L1135.4 465.4 L1135.9 468.1 L1133.0 468.6 L1134.2 470.9 L1134.6 474.7 L1133.1 477.1 L1135.5 479.4 L1134.4 482.8 L1135.5 486.1 L1140.0 489.7 L1138.1 491.0 L1134.5 489.5 L1130.2 486.7 L1126.3 481.4 L1124.9 476.8 L1124.5 472.9 L1123.7 469.0 L1122.3 464.4 L1122.0 459.7 L1121.9 455.0 L1120.5 448.7 L1120.4 442.5 L1119.8 436.2 L1119.3 433.6 L1116.3 431.3 L1112.2 427.8 L1110.0 423.9 L1107.7 419.1 L1105.6 415.2 L1103.9 412.4 L1104.8 409.7 L1105.0 406.5 L1105.3 403.4 L1106.6 402.4 L1108.5 399.4 L1108.8 394.7Z M1194.5 346.2 L1194.5 348.8 L1196.1 348.5 L1197.5 349.4 L1198.2 350.3 L1199.5 349.3 L1202.3 349.1 L1204.0 346.9 L1204.8 345.0 L1204.4 344.3 L1205.7 342.8 L1208.1 341.2 L1207.9 339.3 L1209.5 339.0 L1211.2 339.6 L1212.8 338.5 L1213.8 337.6 L1215.7 338.3 L1216.7 340.5 L1218.4 342.0 L1220.1 342.7 L1222.1 344.2 L1222.3 347.2 L1223.1 345.7 L1223.6 345.7 L1225.2 343.9 L1223.5 343.4 L1222.3 341.9 L1220.0 340.4 L1218.2 338.2 L1217.8 336.2 L1219.3 335.6 L1220.8 337.4 L1223.7 339.6 L1226.1 341.4 L1226.0 343.4 L1227.2 344.9 L1228.9 347.9 L1230.1 349.4 L1230.5 347.4 L1231.6 346.8 L1230.1 344.9 L1230.7 343.6 L1233.4 342.8 L1233.9 342.1 L1235.6 342.3 L1236.6 342.2 L1235.5 341.7 L1235.2 339.5 L1236.4 336.4 L1237.6 334.1 L1240.4 334.8 L1239.5 335.9 L1240.8 337.2 L1242.8 336.2 L1243.8 335.8 L1241.9 334.3 L1244.9 333.1 L1246.5 333.1 L1245.4 335.4 L1245.1 336.7 L1247.6 338.4 L1250.2 340.7 L1250.4 341.7 L1247.7 342.2 L1244.2 341.3 L1240.9 340.9 L1238.8 342.1 L1236.9 342.3 L1234.1 344.0 L1234.9 346.3 L1235.7 348.6 L1236.9 349.0 L1239.3 349.6 L1241.0 349.7 L1243.2 349.5 L1245.4 348.9 L1245.6 350.3 L1245.6 352.2 L1245.0 354.5 L1244.5 357.1 L1242.5 358.4 L1242.8 359.5 L1244.1 361.7 L1245.1 362.5 L1245.6 359.9 L1248.0 365.2 L1250.0 368.2 L1251.5 371.3 L1253.0 374.3 L1255.2 378.9 L1256.8 381.9 L1257.6 385.0 L1259.3 385.4 L1260.4 384.7 L1263.4 383.4 L1265.8 381.8 L1268.1 380.3 L1270.4 378.7 L1272.1 377.4 L1273.5 376.0 L1274.4 373.2 L1276.1 370.4 L1274.6 368.4 L1272.7 367.8 L1271.5 365.5 L1271.0 364.3 L1270.1 366.3 L1268.5 367.6 L1266.7 367.9 L1265.9 365.9 L1265.2 366.9 L1264.2 364.9 L1262.4 362.6 L1260.8 359.6 L1261.8 358.3 L1263.0 358.8 L1265.3 362.1 L1267.3 363.8 L1269.1 363.9 L1271.1 362.9 L1272.6 365.0 L1275.3 365.6 L1277.8 365.8 L1280.7 365.6 L1283.6 365.4 L1285.2 367.5 L1286.6 368.6 L1288.6 369.8 L1287.5 370.3 L1289.3 372.1 L1292.0 371.4 L1292.8 375.1 L1294.3 379.8 L1295.9 383.7 L1297.8 387.6 L1299.0 390.9 L1300.4 392.2 L1301.1 390.9 L1302.3 388.7 L1302.8 386.8 L1303.0 383.6 L1302.5 380.4 L1303.9 378.8 L1306.0 376.4 L1307.4 374.3 L1309.3 372.3 L1309.2 370.7 L1310.8 369.9 L1312.6 370.0 L1314.2 369.0 L1315.7 371.3 L1317.0 373.7 L1319.3 377.6 L1319.8 379.2 L1321.1 379.5 L1323.3 378.3 L1324.0 380.7 L1325.4 383.9 L1326.2 388.8 L1326.1 392.0 L1326.4 392.8 L1328.8 395.2 L1329.6 398.4 L1330.5 400.9 L1333.0 402.8 L1333.9 402.5 L1332.9 398.4 L1332.2 396.0 L1330.8 394.9 L1330.2 393.9 L1328.5 391.2 L1326.9 389.6 L1326.9 385.5 L1327.4 383.1 L1328.5 384.3 L1330.5 385.4 L1331.3 387.0 L1333.3 387.8 L1334.2 390.7 L1335.9 389.4 L1336.4 387.7 L1338.6 386.1 L1338.5 382.8 L1337.3 379.5 L1333.9 376.3 L1332.4 373.9 L1333.1 371.5 L1334.2 369.8 L1336.7 370.2 L1337.7 371.6 L1338.4 369.6 L1340.4 368.2 L1343.7 367.0 L1345.6 363.4 L1345.6 360.0 L1346.4 357.5 L1346.0 355.0 L1343.5 351.8 L1341.5 348.6 L1339.3 347.1 L1339.5 344.6 L1341.1 343.2 L1339.0 342.4 L1337.3 343.6 L1335.4 342.1 L1334.2 340.8 L1335.4 339.9 L1336.9 337.6 L1338.2 338.5 L1338.3 340.8 L1338.7 338.8 L1340.6 338.7 L1343.3 341.7 L1345.1 342.4 L1347.0 346.4 L1348.7 347.0 L1350.0 345.7 L1349.2 343.7 L1346.6 341.0 L1344.4 339.1 L1345.3 336.4 L1344.9 334.2 L1345.8 332.6 L1348.1 331.3 L1347.2 325.9 L1346.5 322.7 L1343.9 319.4 L1342.5 317.0 L1339.2 314.9 L1336.9 315.1 L1334.1 314.4 L1333.0 311.5 L1334.0 309.2 L1333.7 306.7 L1337.6 306.0 L1341.3 305.9 L1343.0 305.1 L1340.6 301.7 L1342.2 300.9 L1343.4 299.4 L1347.0 303.1 L1346.8 305.8 L1347.3 307.5 L1350.9 311.3 L1358.2 317.1 L1356.8 314.1 L1355.6 311.7 L1355.1 309.6 L1352.0 306.6 L1350.8 305.1 L1349.2 303.0 L1349.6 302.3 L1353.2 301.9 L1351.9 299.4 L1352.9 297.4 L1349.8 294.2 L1340.8 289.2 L1336.3 288.5 L1332.3 288.9 L1330.9 290.0 L1327.6 290.5 L1323.9 289.2 L1319.3 289.8 L1312.7 288.6 L1308.4 288.8 L1306.8 290.5 L1304.4 291.7 L1299.9 289.4 L1295.7 288.5 L1292.0 289.3 L1288.1 289.2 L1285.8 289.1 L1284.7 286.9 L1280.2 285.5 L1276.1 284.5 L1274.3 286.8 L1271.9 287.3 L1269.1 289.0 L1268.9 290.5 L1267.8 292.9 L1265.6 291.5 L1263.9 293.9 L1262.1 294.8 L1266.2 298.4 L1267.2 301.9 L1266.1 302.2 L1263.4 299.3 L1260.4 292.9 L1258.0 292.7 L1257.9 295.0 L1258.9 298.0 L1257.4 298.9 L1254.5 299.8 L1250.6 300.3 L1248.0 300.1 L1245.1 301.3 L1241.4 300.5 L1242.5 303.4 L1240.1 306.5 L1236.7 307.1 L1234.8 305.2 L1233.0 303.3 L1235.5 303.2 L1239.5 302.3 L1239.3 301.5 L1234.4 299.6 L1231.9 299.3 L1229.2 298.8 L1227.1 297.0 L1225.3 296.8 L1221.8 298.3 L1218.7 299.8 L1216.5 301.8 L1215.5 304.8 L1214.0 307.1 L1211.9 309.1 L1209.4 310.9 L1209.3 313.9 L1209.9 315.8 L1211.3 317.0 L1212.8 316.7 L1214.6 315.1 L1215.1 315.7 L1216.0 316.9 L1216.8 319.2 L1217.3 320.7 L1218.6 320.7 L1220.3 319.6 L1220.6 317.6 L1220.6 315.4 L1222.1 314.6 L1221.9 313.1 L1220.5 311.6 L1220.8 309.3 L1223.0 307.7 L1223.6 306.2 L1224.3 305.0 L1226.8 305.7 L1226.7 306.4 L1224.1 309.5 L1224.6 312.3 L1226.2 313.8 L1229.4 313.1 L1231.8 313.3 L1231.1 314.4 L1227.3 314.8 L1227.1 316.5 L1228.3 317.8 L1225.4 317.9 L1225.2 319.9 L1225.4 321.1 L1224.4 322.3 L1223.0 321.7 L1220.6 322.5 L1218.6 323.1 L1216.6 322.7 L1215.6 323.0 L1215.3 320.7 L1214.7 317.4 L1212.6 318.5 L1213.0 320.9 L1213.4 323.0 L1212.7 323.8 L1211.2 323.8 L1209.7 324.6 L1208.7 326.8 L1207.7 327.1 L1206.3 327.8 L1206.2 329.1 L1204.6 329.7 L1203.3 329.6 L1202.7 331.1 L1199.6 331.5 L1200.1 332.4 L1202.0 333.2 L1203.0 334.4 L1203.3 336.7 L1203.0 339.0 L1200.2 339.1 L1195.9 338.6 L1194.4 339.7 L1194.9 342.0 L1194.6 344.3 L1194.0 346.1Z M1198.7 329.1 L1201.5 328.2 L1205.9 327.4 L1206.3 325.0 L1204.8 323.8 L1203.1 321.5 L1202.6 320.0 L1202.9 317.7 L1201.3 316.1 L1199.8 316.1 L1198.6 317.7 L1199.2 320.0 L1199.8 321.5 L1201.6 322.3 L1201.4 324.0 L1200.0 324.1 L1200.3 326.1 L1199.3 326.5 L1201.0 327.0 L1198.9 329.0Z M1198.5 325.8 L1198.4 323.2 L1199.0 322.1 L1197.7 321.1 L1196.1 322.1 L1194.6 323.0 L1194.4 326.0 L1195.9 326.7Z M1303.0 389.4 L1305.9 393.1 L1305.2 395.1 L1303.6 395.5 L1303.2 392.3Z M1352.5 349.4 L1355.4 352.5 L1355.3 350.0 L1357.2 348.1 L1357.5 346.3 L1359.1 346.2 L1361.0 345.4 L1362.0 343.8 L1360.5 340.8 L1359.2 337.1 L1356.8 334.4 L1356.3 336.0 L1357.7 338.5 L1357.5 340.6 L1356.2 341.6 L1356.9 344.3 L1353.9 344.9 L1352.6 346.8Z M1355.2 334.4 L1355.5 332.6 L1357.9 333.2 L1358.5 330.8 L1356.7 329.8 L1352.4 327.8 L1352.6 328.6 L1353.4 331.5Z M1351.8 327.0 L1352.2 325.5 L1348.9 322.2 L1350.2 322.0 L1345.0 317.5 L1341.2 314.1 L1341.9 315.4 L1345.0 319.2 L1349.3 323.9Z M1347.9 366.6 L1349.5 368.4 L1349.1 363.2 L1348.3 362.7 L1347.5 364.6Z M1335.9 373.5 L1337.8 372.1 L1338.6 372.9 L1337.9 375.0 L1336.2 374.6Z M1349.8 374.1 L1352.6 373.9 L1353.2 377.3 L1352.7 379.0 L1356.3 381.4 L1356.4 383.4 L1352.2 381.8 L1351.5 379.0 L1350.4 377.7Z M1355.5 393.2 L1355.9 391.2 L1359.2 388.4 L1360.9 392.2 L1360.5 394.4 L1358.0 394.3Z M1354.7 386.5 L1357.3 388.1 L1358.8 385.5 L1356.7 383.9Z M1322.5 395.9 L1325.4 396.5 L1329.0 400.9 L1334.3 407.4 L1336.1 409.8 L1335.6 414.4 L1334.0 414.4 L1331.0 411.4 L1329.3 407.4 L1327.2 402.2 L1324.9 399.3Z M1334.7 416.1 L1335.8 414.6 L1338.8 415.6 L1341.3 416.3 L1343.8 416.2 L1346.1 417.7 L1345.9 419.4 L1341.7 418.5 L1338.1 417.7 L1336.3 417.1Z M1346.6 418.5 L1351.5 419.0 L1356.5 418.7 L1361.4 418.7 L1358.6 421.5 L1351.4 420.0 L1346.5 419.7Z M1339.8 402.5 L1340.6 401.6 L1342.9 400.8 L1344.7 399.6 L1347.7 396.3 L1349.3 393.3 L1352.2 396.2 L1350.9 397.9 L1350.6 401.6 L1352.0 403.3 L1350.4 404.9 L1349.2 407.4 L1349.0 410.8 L1346.5 411.6 L1342.3 409.9 L1341.1 407.4 L1339.9 404.9Z M1352.6 414.1 L1352.1 410.8 L1353.5 404.1 L1354.7 402.8 L1359.1 402.4 L1356.0 404.1 L1354.7 406.6 L1357.2 406.6 L1355.3 408.3 L1355.8 412.5 L1354.6 411.7 L1354.1 409.1 L1353.6 414.2Z M1362.8 401.5 L1364.1 403.2 L1363.4 406.3 L1362.6 404.9Z M1367.1 407.2 L1370.9 406.5 L1375.2 407.5 L1379.5 409.5 L1384.9 412.9 L1387.1 415.6 L1387.1 419.1 L1389.7 423.7 L1386.8 422.7 L1384.9 419.1 L1381.5 420.7 L1378.4 420.8 L1376.2 418.8 L1374.7 419.5 L1375.9 416.2 L1371.9 412.7 L1369.2 411.8 L1368.3 409.7 L1370.2 408.9 L1368.4 408.4Z M1340.6 441.2 L1338.9 448.6 L1338.0 454.4 L1335.4 460.8 L1337.4 462.6 L1340.9 461.2 L1344.3 461.3 L1348.8 459.0 L1352.7 458.1 L1355.0 458.2 L1357.3 460.6 L1357.0 464.4 L1360.9 461.3 L1359.0 465.5 L1360.5 466.1 L1359.4 469.9 L1361.7 471.5 L1364.2 472.4 L1367.4 470.5 L1369.8 470.2 L1373.8 465.3 L1378.2 461.4 L1382.5 455.5 L1384.8 449.4 L1384.0 445.7 L1382.9 443.8 L1382.1 439.3 L1381.4 435.7 L1381.7 431.3 L1380.5 429.5 L1380.7 426.0 L1379.9 423.7 L1378.1 426.8 L1377.1 431.1 L1375.6 434.5 L1374.2 435.3 L1372.3 433.5 L1369.9 430.8 L1371.6 428.2 L1372.5 425.7 L1370.3 425.6 L1367.4 424.6 L1365.3 425.8 L1362.8 429.6 L1360.8 430.4 L1359.3 428.6 L1357.1 430.2 L1354.8 432.7 L1353.0 435.1 L1350.6 437.5 L1347.3 438.7 L1344.7 439.1 L1341.8 441.0Z M1360.8 474.8 L1364.2 475.6 L1362.6 477.7 L1359.6 479.7 L1359.5 477.8Z M1396.7 468.3 L1397.1 470.5 L1395.9 474.2 L1398.0 475.0 L1394.8 477.5 L1390.4 480.6 L1389.2 480.3 L1392.1 477.4 L1391.4 476.7 L1395.1 473.1 L1396.0 469.8Z M1388.5 478.6 L1388.2 480.9 L1383.8 484.1 L1380.1 485.7 L1375.8 487.9 L1374.5 486.5 L1376.5 485.0 L1382.7 482.4 L1386.3 480.2Z M1245.9 295.6 L1249.0 297.0 L1250.8 296.6 L1247.0 293.3 L1246.9 290.3 L1249.1 287.9 L1252.8 287.0 L1248.4 289.0 L1246.6 291.0 L1245.9 293.4Z M1267.0 283.1 L1272.2 283.5 L1273.1 282.0 L1267.7 280.2 L1264.1 281.1Z M1301.8 285.9 L1307.2 287.0 L1309.8 284.8 L1304.5 284.8Z M1218.6 347.1 L1222.1 346.8 L1221.7 349.2 L1218.6 347.9Z M1213.7 342.7 L1215.5 342.7 L1215.4 345.8 L1214.0 345.8Z M1214.0 339.7 L1215.0 339.7 L1215.0 342.1 L1214.3 342.0Z M1231.4 350.8 L1234.6 351.2 L1232.1 351.8Z M1241.5 351.5 L1243.9 350.6 L1242.4 352.1Z"/>
<path fill="#545358" d="M1242.6 358.9 L1242.2 357.2 L1240.6 356.8 L1238.4 357.9 L1233.6 356.7 L1231.2 355.4 L1228.9 354.9 L1227.9 357.1 L1226.8 358.9 L1222.6 357.1 L1219.6 355.0 L1217.3 354.6 L1216.3 352.9 L1217.2 351.1 L1216.5 349.1 L1214.8 348.4 L1212.0 348.8 L1208.0 349.1 L1203.5 351.1 L1202.3 351.7 L1197.9 350.6 L1196.8 353.4 L1193.5 355.6 L1193.1 360.2 L1189.8 363.2 L1187.4 365.5 L1184.8 370.0 L1184.1 373.0 L1184.9 375.3 L1184.5 379.9 L1183.2 382.6 L1184.0 385.2 L1184.1 386.3 L1185.5 387.5 L1186.7 389.0 L1188.2 390.5 L1189.2 393.1 L1191.0 394.6 L1193.5 397.4 L1195.3 398.3 L1198.4 397.2 L1202.1 397.7 L1205.8 396.0 L1208.3 395.4 L1210.8 396.1 L1212.0 398.4 L1213.9 398.1 L1215.8 399.0 L1216.8 401.1 L1216.4 403.4 L1216.0 406.2 L1218.9 410.3 L1219.5 413.3 L1220.7 417.8 L1221.2 421.6 L1219.9 425.4 L1219.0 430.7 L1220.3 435.3 L1222.0 439.9 L1222.6 445.9 L1224.0 448.4 L1225.7 453.3 L1225.8 456.6 L1227.5 457.8 L1230.5 456.6 L1234.0 456.7 L1236.3 455.5 L1239.5 452.7 L1241.6 449.2 L1242.9 448.4 L1243.6 444.6 L1247.0 441.6 L1247.3 438.6 L1246.9 435.5 L1248.9 433.7 L1252.8 430.2 L1254.4 427.2 L1254.5 421.0 L1253.2 417.2 L1253.1 414.9 L1252.7 412.6 L1254.5 409.1 L1256.1 407.5 L1258.0 404.2 L1260.4 402.0 L1262.9 399.6 L1265.3 395.7 L1267.5 389.5 L1267.8 388.9 L1267.6 386.7 L1265.5 387.5 L1263.7 387.9 L1260.1 389.0 L1258.1 387.3 L1257.8 385.8 L1256.1 383.0 L1253.5 380.7 L1252.1 378.9 L1250.7 376.6 L1249.7 373.6 L1249.1 371.3 L1247.4 369.0 L1245.6 365.2 L1244.2 363.0 L1242.8 359.5Z M1265.2 423.4 L1266.3 428.8 L1265.3 431.1 L1263.6 435.7 L1261.4 441.8 L1258.3 444.2 L1256.9 441.0 L1257.0 437.9 L1258.4 434.9 L1258.4 431.0 L1261.4 429.2 L1263.5 425.7Z M1154.1 285.3 L1156.8 288.5 L1162.0 289.5 L1161.8 294.0 L1162.3 297.9 L1162.2 300.9 L1159.0 305.4 L1159.1 310.8 L1163.3 313.5 L1165.7 311.8 L1169.4 305.8 L1172.2 305.1 L1177.6 301.5 L1184.0 299.3 L1186.9 297.1 L1187.8 292.6 L1190.8 288.8 L1192.6 283.6 L1196.9 281.3 L1192.1 279.8 L1186.4 278.2 L1180.3 278.1 L1170.2 279.6 L1165.6 279.9 L1157.8 283.3Z M1102.5 370.2 L1106.5 368.4 L1111.1 369.6 L1115.0 373.2 L1111.0 373.6 L1108.5 370.7 L1103.7 370.4Z M1114.6 373.8 L1117.6 373.8 L1121.5 375.9 L1121.1 376.5 L1118.3 377.2 L1114.2 376.2Z M1091.8 381.7 L1092.4 379.3 L1093.7 379.3 L1094.7 376.5 L1096.3 376.5 L1097.4 377.0 L1096.3 379.7 L1100.9 379.7 L1102.8 381.1 L1102.0 385.9 L1101.6 387.6 L1099.1 387.4 L1097.2 384.4 L1094.9 383.4 L1092.6 382.5Z M1129.3 391.9 L1130.7 392.1 L1133.4 395.6 L1136.5 395.8 L1139.6 397.2 L1140.7 398.5 L1137.0 401.4 L1134.5 402.0 L1132.6 402.6 L1130.5 402.1 L1130.2 398.7 L1128.6 397.9 L1129.4 396.9 L1128.6 395.8 L1129.5 393.8Z M1119.0 422.1 L1123.8 420.2 L1129.2 425.9 L1131.4 430.2 L1133.6 430.2 L1134.6 434.4 L1133.2 434.9 L1129.2 436.8 L1129.3 439.4 L1125.1 439.2 L1123.3 440.5 L1122.0 437.0 L1120.1 432.3 L1120.2 424.5Z M1137.5 456.8 L1137.4 451.6 L1139.4 452.5 L1143.2 455.2 L1143.1 458.0 L1141.9 458.9 L1140.1 458.7 L1137.8 457.5Z M1249.8 355.7 L1252.6 347.8 L1255.2 347.9 L1256.4 350.0 L1257.2 351.2 L1256.7 352.8 L1257.9 354.3 L1259.9 355.8 L1260.6 358.1 L1260.2 359.1 L1256.8 360.1 L1253.5 357.4 L1250.1 356.0Z M1256.8 381.9 L1257.6 385.0 L1259.3 385.4 L1260.4 384.7 L1263.4 383.4 L1265.8 381.8 L1268.1 380.3 L1270.4 378.7 L1272.1 377.4 L1273.5 376.0 L1274.4 373.2 L1276.1 370.4 L1274.6 368.4 L1272.7 367.8 L1271.5 365.5 L1271.4 367.1 L1271.2 369.9 L1271.1 374.0 L1267.6 375.6 L1264.1 376.3 L1261.9 378.8 L1258.2 378.4 L1257.3 379.3Z M1255.5 335.1 L1254.2 332.1 L1255.6 331.3 L1253.4 329.0 L1254.0 327.5 L1256.6 325.9 L1261.0 326.8 L1263.9 326.0 L1265.6 325.0 L1266.7 323.9 L1265.3 321.6 L1268.9 320.7 L1272.3 319.2 L1277.2 321.3 L1280.2 320.3 L1281.8 321.5 L1286.1 325.1 L1289.0 324.9 L1292.2 327.1 L1294.4 327.4 L1294.5 330.9 L1291.9 331.1 L1292.4 333.4 L1290.1 334.3 L1291.8 337.7 L1290.2 340.3 L1288.5 341.5 L1286.5 342.4 L1286.3 343.4 L1289.0 346.7 L1284.8 345.8 L1282.9 344.9 L1281.3 347.3 L1279.5 346.8 L1277.7 348.6 L1275.7 349.9 L1273.6 348.4 L1271.6 346.9 L1267.6 346.6 L1265.4 347.4 L1263.7 344.4 L1264.4 342.5 L1262.7 341.0 L1260.5 338.8 L1259.6 336.5 L1261.5 335.7 L1260.9 333.4 L1259.1 332.7 L1256.7 333.5Z M1274.1 353.0 L1274.2 350.7 L1273.6 348.4 L1275.7 349.9 L1277.7 348.6 L1279.5 346.8 L1281.3 347.3 L1282.9 344.9 L1284.8 345.8 L1285.4 347.9 L1288.6 347.0 L1285.6 348.7 L1285.7 351.1 L1284.3 352.1 L1285.4 354.2 L1284.7 356.1 L1282.3 358.4 L1275.7 358.7 L1276.2 356.4 L1275.3 356.1Z M1295.3 327.5 L1296.5 325.5 L1298.2 324.7 L1302.9 322.3 L1304.3 323.8 L1308.3 324.4 L1310.3 324.4 L1314.0 325.4 L1315.7 325.5 L1317.2 325.5 L1320.6 323.6 L1323.1 324.0 L1323.8 326.9 L1326.4 327.1 L1329.3 328.5 L1327.3 329.2 L1324.9 331.1 L1323.9 334.0 L1324.0 335.1 L1320.2 336.2 L1318.9 337.8 L1313.9 336.6 L1308.9 336.8 L1306.6 334.4 L1303.7 333.5 L1301.2 333.2 L1299.6 330.5 L1295.9 328.3Z M1315.7 371.3 L1317.0 373.7 L1319.3 377.6 L1319.8 379.2 L1321.1 379.5 L1323.3 378.3 L1324.0 380.7 L1325.4 383.9 L1326.2 388.8 L1326.5 385.5 L1325.8 382.3 L1324.7 379.1 L1323.4 376.7 L1322.9 373.0 L1325.2 372.1 L1326.9 370.6 L1324.7 370.2 L1323.3 369.1 L1321.8 365.4 L1320.8 366.3 L1319.9 363.1 L1320.5 360.6 L1318.7 359.6 L1317.7 361.6 L1317.2 363.2 L1317.0 365.6 L1316.2 368.1 L1315.4 368.9Z M1379.5 409.5 L1384.9 412.9 L1387.1 415.6 L1387.1 419.1 L1389.7 423.7 L1386.8 422.7 L1384.9 419.1 L1381.5 420.7 L1378.4 420.8Z M1388.4 414.7 L1393.0 412.5 L1393.5 413.9 L1390.2 416.2Z M1212.2 285.9 L1216.2 288.9 L1220.2 287.3 L1222.6 283.5 L1217.8 282.8 L1212.7 283.9Z"/>
<path fill="#c296de" d="M1197.9 350.6 L1202.1 351.7 L1202.7 353.4 L1202.9 355.7 L1200.5 357.2 L1198.8 359.4 L1194.4 361.4 L1194.3 363.5 L1194.3 365.5 L1190.4 365.5 L1190.2 369.3 L1188.9 372.6 L1184.1 372.6 L1184.8 370.0 L1187.4 365.5 L1189.8 363.2 L1193.1 360.2 L1193.5 355.6 L1196.8 353.4Z M1233.6 356.7 L1238.4 357.9 L1240.6 356.8 L1242.2 357.2 L1242.6 358.9 L1242.8 359.5 L1244.2 363.0 L1245.6 365.2 L1247.4 369.0 L1249.0 371.3 L1234.7 371.5Z M1208.0 395.2 L1207.9 391.3 L1209.0 387.2 L1209.5 384.5 L1213.2 385.2 L1216.9 384.8 L1220.0 385.1 L1221.4 384.4 L1222.4 386.7 L1220.7 390.5 L1219.7 392.0 L1218.2 394.8 L1216.4 395.1 L1215.1 398.0 L1212.0 398.4 L1210.8 396.1 L1208.3 395.4Z M1200.6 397.2 L1201.1 393.6 L1201.4 388.3 L1204.5 388.1 L1205.2 389.8 L1205.2 393.6 L1206.1 395.7 L1203.4 397.2Z M1224.0 448.4 L1225.7 453.3 L1225.8 456.6 L1227.5 457.8 L1230.5 456.6 L1234.0 456.7 L1236.3 455.5 L1239.5 452.7 L1241.6 449.2 L1242.9 448.4 L1243.5 445.8 L1242.5 444.5 L1242.2 439.1 L1240.0 438.6 L1236.9 440.7 L1235.0 443.8 L1232.0 443.4 L1228.5 442.6 L1228.2 448.1 L1225.2 448.5Z"/>
<path fill="#b58fd6" d="M1231.6 424.7 L1231.4 430.0 L1233.2 432.3 L1235.4 432.0 L1237.4 432.1 L1239.8 429.3 L1241.8 428.7 L1241.6 427.1 L1245.1 426.3 L1245.6 421.0 L1242.9 418.1 L1240.2 417.9 L1239.9 420.9 L1240.9 423.5 L1239.0 424.0 L1237.2 422.5 L1234.2 421.7 L1234.1 424.7Z"/>
<path fill="#353535" d="M1255.1 335.9 L1256.7 333.5 L1259.1 332.7 L1260.9 333.4 L1261.5 335.7 L1259.6 336.5 L1260.5 338.8 L1262.7 341.0 L1264.4 342.5 L1263.7 344.4 L1265.4 347.4 L1262.3 348.3 L1259.8 347.3 L1259.5 343.2 L1256.5 339.2Z"/></g>
<g><path fill="#fedc1d" d="M1533.9 294.7 L1540.8 291.5 L1546.2 289.7 L1552.9 288.8 L1554.8 289.9 L1558.0 291.5 L1559.9 292.4 L1563.3 293.5 L1568.8 293.1 L1571.5 294.3 L1575.6 295.7 L1579.5 297.5 L1587.0 298.6 L1591.8 297.9 L1595.0 295.1 L1597.3 293.0 L1597.5 294.5 L1597.0 297.6 L1598.2 299.2 L1601.1 296.6 L1602.7 297.2 L1601.3 300.2 L1599.9 301.7 L1597.1 301.9 L1594.7 302.8 L1590.6 304.8 L1584.0 309.0 L1581.5 312.3 L1581.7 315.2 L1584.9 316.2 L1586.7 318.2 L1587.3 322.1 L1588.4 324.7 L1591.4 320.6 L1594.8 317.7 L1596.4 313.9 L1597.8 310.9 L1599.2 308.2 L1602.7 308.4 L1605.2 310.6 L1604.1 313.6 L1609.2 311.9 L1610.1 316.3 L1610.1 318.6 L1612.5 321.8 L1613.2 324.6 L1610.2 326.3 L1607.8 327.4 L1603.7 327.3 L1601.1 327.4 L1597.6 329.6 L1602.6 329.1 L1601.5 331.3 L1600.7 332.9 L1604.4 334.6 L1605.7 333.9 L1601.3 336.0 L1598.2 337.0 L1598.3 335.1 L1596.7 335.8 L1593.9 336.9 L1592.4 339.8 L1590.4 341.0 L1587.9 341.6 L1586.8 343.5 L1585.3 344.6 L1584.0 346.9 L1583.7 349.8 L1581.7 350.8 L1578.9 352.7 L1576.0 354.8 L1574.6 358.4 L1575.1 362.3 L1574.1 365.2 L1572.7 363.8 L1572.3 361.1 L1572.5 358.8 L1571.4 357.4 L1569.6 356.7 L1566.1 356.7 L1565.0 358.4 L1563.3 358.2 L1560.0 357.6 L1558.6 358.4 L1555.2 360.7 L1554.2 363.4 L1552.5 368.7 L1552.5 371.1 L1553.4 374.4 L1555.0 375.7 L1558.1 375.2 L1560.2 373.8 L1560.9 371.4 L1563.8 370.7 L1565.0 370.9 L1563.8 373.9 L1562.4 377.0 L1561.3 379.7 L1565.9 379.7 L1567.8 381.1 L1567.0 385.9 L1566.5 387.5 L1567.9 389.9 L1570.3 390.5 L1572.2 389.9 L1573.9 391.2 L1573.4 393.1 L1572.6 393.1 L1570.7 393.4 L1570.1 392.3 L1568.3 391.9 L1566.0 389.9 L1564.1 387.4 L1562.2 384.4 L1559.9 383.4 L1557.6 382.5 L1556.1 380.1 L1554.5 378.9 L1551.9 379.6 L1549.6 378.6 L1546.9 376.6 L1544.2 375.2 L1542.6 371.5 L1543.3 369.9 L1543.1 367.8 L1541.6 363.8 L1540.5 361.6 L1539.6 359.0 L1539.0 354.9 L1537.5 353.1 L1538.1 358.1 L1538.3 363.1 L1538.7 366.4 L1537.9 367.2 L1536.6 364.7 L1537.1 362.2 L1535.4 359.1 L1536.7 356.4 L1535.4 354.6 L1535.5 351.3 L1535.0 348.8 L1533.1 347.6 L1533.3 344.4 L1533.6 342.3 L1533.7 339.4 L1535.1 336.2 L1536.3 333.8 L1540.1 328.8 L1541.9 325.3 L1543.4 322.8 L1542.3 321.0 L1543.8 317.8 L1544.0 315.3 L1544.8 312.9 L1545.1 309.5 L1544.2 308.1 L1543.8 306.3 L1541.7 305.7 L1540.7 304.1 L1537.4 305.0 L1534.6 305.7 L1533.5 305.7 L1536.3 303.9 L1531.8 305.7 L1529.4 307.4 L1525.3 308.4 L1520.7 309.9 L1517.5 310.5 L1515.0 310.8 L1519.4 309.3 L1522.8 308.1 L1527.5 305.8 L1526.1 305.0 L1526.8 303.4 L1526.1 302.0 L1528.2 300.2 L1531.1 298.6 L1536.0 297.4 L1534.0 296.6 L1532.9 296.2Z"/>
<path fill="#6ed19c" d="M1559.9 292.4 L1563.3 293.5 L1568.8 293.1 L1571.5 294.3 L1575.6 295.7 L1579.5 297.5 L1587.0 298.6 L1591.8 297.9 L1595.7 298.2 L1599.6 298.5 L1599.9 301.7 L1595.8 301.4 L1590.6 304.8 L1584.0 309.0 L1581.5 312.3 L1581.7 315.2 L1584.9 316.2 L1586.7 318.2 L1587.3 322.1 L1588.4 324.7 L1591.4 320.6 L1594.8 317.7 L1596.4 313.9 L1597.8 310.9 L1599.2 308.2 L1602.7 308.4 L1605.2 310.6 L1604.1 313.6 L1609.2 311.9 L1610.1 316.3 L1610.1 318.6 L1612.5 321.8 L1613.2 324.6 L1610.2 326.3 L1607.8 327.4 L1603.7 327.3 L1601.1 327.4 L1597.6 329.6 L1602.6 329.1 L1601.5 331.3 L1600.7 332.9 L1604.4 334.6 L1605.7 333.9 L1601.3 336.0 L1598.2 337.0 L1598.3 335.1 L1596.9 335.0 L1598.0 332.0 L1596.8 331.3 L1595.6 332.3 L1593.0 334.8 L1589.6 334.6 L1587.3 335.8 L1584.0 337.2 L1580.2 337.3 L1581.3 333.4 L1580.4 331.7 L1576.4 329.1 L1572.0 326.5 L1571.6 327.1 L1544.2 324.6 L1542.9 325.6 L1543.4 322.8 L1542.3 321.0 L1543.8 317.8 L1544.0 315.3 L1545.1 314.6 L1546.5 313.1 L1546.9 309.1 L1547.8 306.9 L1544.9 307.8 L1543.8 305.5Z M1575.8 294.8 L1587.8 296.8 L1593.3 291.1 L1586.9 290.5 L1579.8 291.3Z M1605.7 286.8 L1612.0 287.9 L1619.7 284.6 L1631.2 279.9 L1626.8 278.3 L1612.8 279.8 L1606.9 281.6Z M1601.7 289.5 L1610.2 290.1 L1612.4 287.4 L1604.1 286.9Z M1574.1 291.4 L1581.1 292.2 L1583.7 288.6 L1578.4 288.1Z M1585.4 287.3 L1594.2 287.4 L1597.0 286.1 L1588.8 284.6Z M1591.2 293.2 L1594.8 293.5 L1600.3 290.1 L1596.1 289.8Z M1593.2 304.3 L1596.7 302.5 L1598.3 304.7 L1598.2 306.2 L1594.7 306.7 L1593.0 305.8Z M1607.0 331.4 L1610.8 332.8 L1613.8 332.6 L1614.6 328.8 L1613.0 325.7 L1610.5 327.1Z M1588.7 297.6 L1591.4 297.4 L1593.0 296.0 L1591.1 295.8Z M1595.9 292.8 L1599.8 292.4 L1602.1 290.3 L1598.9 290.0Z M1596.1 288.3 L1599.3 288.8 L1602.7 287.6 L1600.4 286.4Z M1603.9 284.4 L1609.8 284.0 L1613.9 280.6 L1607.6 281.0Z M1582.9 286.3 L1589.7 286.2 L1590.2 284.0 L1586.2 284.4Z M1596.6 301.4 L1598.5 305.0 L1605.6 303.6 L1608.7 300.0 L1605.9 296.7 L1601.8 296.7Z"/>
<path fill="#fedc1d" d="M1515.7 310.4 L1513.5 311.0 L1511.2 311.7 L1510.5 312.3 L1512.8 311.6 L1514.8 311.1Z M1528.1 308.1 L1530.9 307.3 L1529.5 308.3 L1527.3 309.2Z"/>
<path fill="#545358" d="M1619.1 285.3 L1621.8 288.5 L1627.0 289.5 L1626.8 294.0 L1627.3 297.9 L1627.2 300.9 L1624.0 305.4 L1624.1 310.8 L1628.3 313.5 L1630.7 311.8 L1634.4 305.8 L1637.2 305.1 L1642.6 301.5 L1649.0 299.3 L1651.9 297.1 L1652.8 292.6 L1655.8 288.8 L1657.6 283.6 L1661.9 281.3 L1657.1 279.8 L1651.4 278.2 L1645.3 278.1 L1635.2 279.6 L1630.6 279.9 L1622.8 283.3Z M1567.5 370.2 L1571.5 368.4 L1576.1 369.6 L1580.0 373.2 L1576.0 373.6 L1573.5 370.7 L1568.7 370.4Z M1579.6 373.8 L1582.6 373.8 L1586.5 375.9 L1586.1 376.5 L1583.3 377.2 L1579.2 376.2Z M1556.8 381.7 L1557.4 379.3 L1558.7 379.3 L1559.7 376.5 L1561.3 376.5 L1562.4 377.0 L1561.3 379.7 L1565.9 379.7 L1567.8 381.1 L1567.0 385.9 L1566.6 387.6 L1564.1 387.4 L1562.2 384.4 L1559.9 383.4 L1557.6 382.5Z"/>
<path fill="#2fb889" d="M1566.6 387.6 L1566.8 387.8 L1567.9 389.9 L1570.3 390.5 L1572.2 389.9 L1573.9 391.2 L1573.4 393.1 L1572.6 393.1 L1570.7 393.4 L1570.1 392.3 L1568.3 391.9 L1566.0 389.9 L1564.1 387.4Z"/>
<path fill="#2fb889" d="M1648.6 305.4 L1650.6 304.1 L1655.8 304.0 L1657.3 305.5 L1656.7 307.2 L1653.4 308.7 L1649.9 308.0Z"/>
<path fill="#ec6b1e" d="M1573.9 391.2 L1575.9 390.0 L1576.6 387.9 L1578.6 387.2 L1581.2 385.7 L1581.8 387.7 L1583.6 386.2 L1585.8 388.5 L1588.3 388.4 L1590.8 388.3 L1593.5 388.6 L1594.3 391.0 L1596.1 392.5 L1598.4 395.6 L1601.5 395.8 L1604.6 397.2 L1606.4 398.8 L1607.6 402.2 L1607.8 404.9 L1610.7 406.0 L1614.4 408.6 L1618.8 409.4 L1621.9 410.6 L1625.9 412.9 L1626.6 415.9 L1626.0 419.2 L1623.8 421.8 L1621.9 425.5 L1622.2 432.0 L1620.7 436.3 L1619.2 440.0 L1616.3 440.7 L1613.5 442.6 L1612.1 445.7 L1612.3 448.8 L1610.8 452.7 L1609.2 456.3 L1608.4 458.1 L1606.8 458.9 L1604.4 458.2 L1602.7 458.3 L1604.5 461.3 L1605.1 464.0 L1600.4 465.4 L1600.9 468.1 L1598.0 468.6 L1599.2 470.9 L1599.6 474.7 L1598.1 477.1 L1600.5 479.4 L1599.4 482.8 L1600.5 486.1 L1605.0 489.7 L1603.1 491.0 L1599.5 489.5 L1595.2 486.7 L1591.3 481.4 L1589.9 476.8 L1589.5 472.9 L1588.7 469.0 L1587.3 464.4 L1587.0 459.7 L1586.9 455.0 L1585.5 448.7 L1585.4 442.5 L1584.8 436.2 L1584.3 433.6 L1581.3 431.3 L1577.2 427.8 L1575.0 423.9 L1572.7 419.1 L1570.6 415.2 L1568.9 412.4 L1569.8 409.7 L1570.0 406.5 L1570.3 403.4 L1571.6 402.4 L1573.5 399.4 L1573.8 394.7Z"/>
<path fill="#de1629" d="M1573.9 391.2 L1575.9 390.0 L1576.6 387.9 L1578.6 387.2 L1581.2 385.7 L1581.8 387.7 L1583.6 386.2 L1585.8 388.5 L1588.3 388.4 L1590.8 388.3 L1593.5 388.6 L1594.3 391.0 L1594.3 391.9 L1594.5 393.8 L1593.6 395.8 L1594.4 396.9 L1593.6 397.9 L1595.2 398.7 L1591.8 398.7 L1589.6 399.0 L1590.2 402.6 L1586.7 403.1 L1586.1 401.8 L1583.4 403.4 L1582.7 405.3 L1583.5 406.8 L1582.8 411.5 L1579.1 408.9 L1575.9 405.1 L1573.4 403.7 L1571.6 402.4 L1573.5 399.4 L1573.8 394.7Z M1571.6 402.4 L1570.3 403.4 L1570.0 406.5 L1569.8 409.7 L1568.9 412.4 L1570.6 415.2 L1572.7 419.1 L1575.0 423.9 L1577.2 427.8 L1581.3 431.3 L1584.3 433.6 L1585.1 432.3 L1585.2 424.5 L1584.0 422.1 L1582.7 422.2 L1582.6 419.8 L1580.2 419.8 L1579.1 415.9 L1580.4 412.8 L1582.8 411.5 L1579.1 408.9 L1575.9 405.1 L1573.4 403.7Z M1590.1 439.2 L1594.3 439.4 L1598.0 442.5 L1600.4 447.2 L1603.5 447.4 L1604.7 444.5 L1606.0 446.6 L1604.1 449.0 L1602.4 451.6 L1602.5 456.8 L1602.7 458.3 L1604.5 461.3 L1605.1 464.0 L1600.4 465.4 L1600.9 468.1 L1598.0 468.6 L1599.2 470.9 L1599.6 474.7 L1598.1 477.1 L1600.5 479.4 L1599.4 482.8 L1600.5 486.1 L1605.0 489.7 L1602.7 490.1 L1600.5 486.4 L1596.1 484.3 L1593.9 481.3 L1593.3 476.6 L1592.2 473.5 L1590.4 467.4 L1589.6 462.7 L1589.2 458.0 L1588.3 453.3 L1587.8 448.7 L1588.1 444.0 L1589.4 440.8Z"/>
<path fill="#2fb889" d="M1581.8 387.7 L1583.6 386.2 L1585.8 388.5 L1588.3 388.4 L1590.8 388.3 L1593.5 388.6 L1594.3 391.0 L1594.3 391.9 L1594.5 393.8 L1593.6 395.8 L1594.4 396.9 L1593.6 397.9 L1595.2 398.7 L1591.8 398.7 L1589.6 399.0 L1590.2 402.6 L1586.7 403.1 L1586.1 401.8 L1585.6 397.9 L1586.1 395.3 L1583.0 394.0 L1580.6 394.0 L1580.0 392.4 L1580.7 387.7Z M1594.2 436.8 L1598.2 434.9 L1599.6 434.4 L1599.6 436.7 L1600.1 439.0 L1603.0 439.7 L1604.7 442.0 L1604.7 444.5 L1603.5 447.4 L1600.4 447.2 L1598.0 442.5 L1594.8 439.4Z"/>
<path fill="#ec6b1e" d="M1584.3 433.6 L1584.8 436.2 L1585.4 442.5 L1585.5 448.7 L1586.9 455.0 L1587.0 459.7 L1587.3 464.4 L1588.7 469.0 L1589.5 472.9 L1589.9 476.8 L1591.3 481.4 L1595.2 486.7 L1599.5 489.5 L1603.1 491.0 L1602.7 490.1 L1600.5 486.4 L1596.1 484.3 L1593.9 481.3 L1593.3 476.6 L1592.2 473.5 L1590.4 467.4 L1589.6 462.7 L1589.2 458.0 L1588.3 453.3 L1587.8 448.7 L1588.1 444.0 L1589.4 440.8 L1588.3 440.5 L1587.0 437.0 L1585.1 432.3Z"/>
<path fill="#545358" d="M1584.0 422.1 L1588.8 420.2 L1594.2 425.9 L1596.4 430.2 L1598.6 430.2 L1599.6 434.4 L1598.2 434.9 L1594.2 436.8 L1594.3 439.4 L1590.1 439.2 L1588.3 440.5 L1587.0 437.0 L1585.1 432.3 L1585.2 424.5Z M1602.5 456.8 L1602.4 451.6 L1604.4 452.5 L1608.2 455.2 L1608.1 458.0 L1606.9 458.9 L1605.1 458.7 L1602.8 457.5Z M1594.3 391.9 L1595.7 392.1 L1598.4 395.6 L1601.5 395.8 L1604.6 397.2 L1605.7 398.5 L1602.0 401.4 L1599.5 402.0 L1597.6 402.6 L1595.5 402.1 L1595.2 398.7 L1593.6 397.9 L1594.4 396.9 L1593.6 395.8 L1594.5 393.8Z"/>
<path fill="#fedc1d" d="M1602.7 396.1 L1605.2 397.2 L1605.7 398.5 L1604.5 401.4 L1602.4 401.5 L1602.1 396.9Z"/>
<path fill="#fedc1d" d="M1659.5 346.2 L1659.5 348.8 L1661.1 348.5 L1662.5 349.4 L1663.2 350.3 L1664.5 349.3 L1667.3 349.1 L1669.0 346.9 L1669.8 345.0 L1669.4 344.3 L1670.7 342.8 L1673.1 341.2 L1672.9 339.3 L1674.5 339.0 L1676.2 339.6 L1677.8 338.5 L1678.8 337.6 L1680.7 338.3 L1681.7 340.5 L1683.4 342.0 L1685.1 342.7 L1687.1 344.2 L1687.3 347.2 L1688.1 345.7 L1688.6 345.7 L1690.2 343.9 L1688.5 343.4 L1687.3 341.9 L1685.0 340.4 L1683.2 338.2 L1682.8 336.2 L1684.3 335.6 L1685.8 337.4 L1688.7 339.6 L1691.1 341.4 L1691.0 343.4 L1692.2 344.9 L1693.9 347.9 L1695.1 349.4 L1695.5 347.4 L1696.6 346.8 L1695.1 344.9 L1695.7 343.6 L1698.4 342.8 L1698.9 342.1 L1700.6 342.3 L1701.6 342.2 L1700.5 341.7 L1700.2 339.5 L1701.4 336.4 L1702.6 334.1 L1705.4 334.8 L1704.5 335.9 L1705.8 337.2 L1707.8 336.2 L1708.8 335.8 L1706.9 334.3 L1709.9 333.1 L1711.5 333.1 L1710.4 335.4 L1710.1 336.7 L1712.6 338.4 L1715.2 340.7 L1715.4 341.7 L1712.7 342.2 L1709.2 341.3 L1705.9 340.9 L1703.8 342.1 L1701.9 342.3 L1699.1 344.0 L1699.9 346.3 L1700.7 348.6 L1701.9 349.0 L1704.3 349.6 L1706.0 349.7 L1708.2 349.5 L1710.4 348.9 L1710.6 350.3 L1710.6 352.2 L1710.0 354.5 L1709.5 357.1 L1707.5 358.4 L1707.8 359.5 L1709.1 361.7 L1710.1 362.5 L1710.6 359.9 L1713.0 365.2 L1715.0 368.2 L1716.5 371.3 L1718.0 374.3 L1720.2 378.9 L1721.8 381.9 L1722.6 385.0 L1724.3 385.4 L1725.4 384.7 L1728.4 383.4 L1730.8 381.8 L1733.1 380.3 L1735.4 378.7 L1737.1 377.4 L1738.5 376.0 L1739.4 373.2 L1741.1 370.4 L1739.6 368.4 L1737.7 367.8 L1736.5 365.5 L1736.0 364.3 L1735.1 366.3 L1733.5 367.6 L1731.7 367.9 L1730.9 365.9 L1730.2 366.9 L1729.2 364.9 L1727.4 362.6 L1725.8 359.6 L1726.8 358.3 L1728.0 358.8 L1730.3 362.1 L1732.3 363.8 L1734.1 363.9 L1736.1 362.9 L1737.6 365.0 L1740.3 365.6 L1742.8 365.8 L1745.7 365.6 L1748.6 365.4 L1750.2 367.5 L1751.6 368.6 L1753.6 369.8 L1752.5 370.3 L1754.3 372.1 L1757.0 371.4 L1757.8 375.1 L1759.3 379.8 L1760.9 383.7 L1762.8 387.6 L1764.0 390.9 L1765.4 392.2 L1766.1 390.9 L1767.3 388.7 L1767.8 386.8 L1768.0 383.6 L1767.5 380.4 L1768.9 378.8 L1771.0 376.4 L1772.4 374.3 L1774.3 372.3 L1774.2 370.7 L1775.8 369.9 L1777.6 370.0 L1779.2 369.0 L1780.7 371.3 L1782.0 373.7 L1784.3 377.6 L1784.8 379.2 L1786.1 379.5 L1788.3 378.3 L1789.0 380.7 L1790.4 383.9 L1791.2 388.8 L1791.1 392.0 L1791.4 392.8 L1793.8 395.2 L1794.6 398.4 L1795.5 400.9 L1798.0 402.8 L1798.9 402.5 L1797.9 398.4 L1797.2 396.0 L1795.8 394.9 L1795.2 393.9 L1793.5 391.2 L1791.9 389.6 L1791.9 385.5 L1792.4 383.1 L1793.5 384.3 L1795.5 385.4 L1796.3 387.0 L1798.3 387.8 L1799.2 390.7 L1800.9 389.4 L1801.4 387.7 L1803.6 386.1 L1803.5 382.8 L1802.3 379.5 L1798.9 376.3 L1797.4 373.9 L1798.1 371.5 L1799.2 369.8 L1801.7 370.2 L1802.7 371.6 L1803.4 369.6 L1805.4 368.2 L1808.7 367.0 L1810.6 363.4 L1810.6 360.0 L1811.4 357.5 L1811.0 355.0 L1808.5 351.8 L1806.5 348.6 L1804.3 347.1 L1804.5 344.6 L1806.1 343.2 L1804.0 342.4 L1802.3 343.6 L1800.4 342.1 L1799.2 340.8 L1800.4 339.9 L1801.9 337.6 L1803.2 338.5 L1803.3 340.8 L1803.7 338.8 L1805.6 338.7 L1808.3 341.7 L1810.1 342.4 L1812.0 346.4 L1813.7 347.0 L1815.0 345.7 L1814.2 343.7 L1811.6 341.0 L1809.4 339.1 L1810.3 336.4 L1809.9 334.2 L1810.8 332.6 L1813.1 331.3 L1812.2 325.9 L1811.5 322.7 L1808.9 319.4 L1807.5 317.0 L1804.2 314.9 L1801.9 315.1 L1799.1 314.4 L1798.0 311.5 L1799.0 309.2 L1798.7 306.7 L1802.6 306.0 L1806.3 305.9 L1808.0 305.1 L1805.6 301.7 L1807.2 300.9 L1808.4 299.4 L1812.0 303.1 L1811.8 305.8 L1812.3 307.5 L1815.9 311.3 L1823.2 317.1 L1821.8 314.1 L1820.6 311.7 L1820.1 309.6 L1817.0 306.6 L1815.8 305.1 L1814.2 303.0 L1814.6 302.3 L1818.2 301.9 L1816.9 299.4 L1817.9 297.4 L1814.8 294.2 L1805.8 289.2 L1801.3 288.5 L1797.3 288.9 L1795.9 290.0 L1792.6 290.5 L1788.9 289.2 L1784.3 289.8 L1777.7 288.6 L1773.4 288.8 L1771.8 290.5 L1769.4 291.7 L1764.9 289.4 L1760.7 288.5 L1757.0 289.3 L1753.1 289.2 L1750.8 289.1 L1749.7 286.9 L1745.2 285.5 L1741.1 284.5 L1739.3 286.8 L1736.9 287.3 L1734.1 289.0 L1733.9 290.5 L1732.8 292.9 L1730.6 291.5 L1728.9 293.9 L1727.1 294.8 L1731.2 298.4 L1732.2 301.9 L1731.1 302.2 L1728.4 299.3 L1725.4 292.9 L1723.0 292.7 L1722.9 295.0 L1723.9 298.0 L1722.4 298.9 L1719.5 299.8 L1715.6 300.3 L1713.0 300.1 L1710.1 301.3 L1706.4 300.5 L1707.5 303.4 L1705.1 306.5 L1701.7 307.1 L1699.8 305.2 L1698.0 303.3 L1700.5 303.2 L1704.5 302.3 L1704.3 301.5 L1699.4 299.6 L1696.9 299.3 L1694.2 298.8 L1692.1 297.0 L1690.3 296.8 L1686.8 298.3 L1683.7 299.8 L1681.5 301.8 L1680.5 304.8 L1679.0 307.1 L1676.9 309.1 L1674.4 310.9 L1674.3 313.9 L1674.9 315.8 L1676.3 317.0 L1677.8 316.7 L1679.6 315.1 L1680.1 315.7 L1681.0 316.9 L1681.8 319.2 L1682.3 320.7 L1683.6 320.7 L1685.3 319.6 L1685.6 317.6 L1685.6 315.4 L1687.1 314.6 L1686.9 313.1 L1685.5 311.6 L1685.8 309.3 L1688.0 307.7 L1688.6 306.2 L1689.3 305.0 L1691.8 305.7 L1691.7 306.4 L1689.1 309.5 L1689.6 312.3 L1691.2 313.8 L1694.4 313.1 L1696.8 313.3 L1696.1 314.4 L1692.3 314.8 L1692.1 316.5 L1693.3 317.8 L1690.4 317.9 L1690.2 319.9 L1690.4 321.1 L1689.4 322.3 L1688.0 321.7 L1685.6 322.5 L1683.6 323.1 L1681.6 322.7 L1680.6 323.0 L1680.3 320.7 L1679.7 317.4 L1677.6 318.5 L1678.0 320.9 L1678.4 323.0 L1677.7 323.8 L1676.2 323.8 L1674.7 324.6 L1673.7 326.8 L1672.7 327.1 L1671.3 327.8 L1671.2 329.1 L1669.6 329.7 L1668.3 329.6 L1667.7 331.1 L1664.6 331.5 L1665.1 332.4 L1667.0 333.2 L1668.0 334.4 L1668.3 336.7 L1668.0 339.0 L1665.2 339.1 L1660.9 338.6 L1659.4 339.7 L1659.9 342.0 L1659.6 344.3 L1659.0 346.1Z M1663.7 329.1 L1666.5 328.2 L1670.9 327.4 L1671.3 325.0 L1669.8 323.8 L1668.1 321.5 L1667.6 320.0 L1667.9 317.7 L1666.3 316.1 L1664.8 316.1 L1663.6 317.7 L1664.2 320.0 L1664.8 321.5 L1666.6 322.3 L1666.4 324.0 L1665.0 324.1 L1665.3 326.1 L1664.3 326.5 L1666.0 327.0 L1663.9 329.0Z M1816.8 327.0 L1817.2 325.5 L1813.9 322.2 L1815.2 322.0 L1810.0 317.5 L1806.2 314.1 L1806.9 315.4 L1810.0 319.2 L1814.3 323.9Z M1710.9 295.6 L1714.0 297.0 L1715.8 296.6 L1712.0 293.3 L1711.9 290.3 L1714.1 287.9 L1717.8 287.0 L1713.4 289.0 L1711.6 291.0 L1710.9 293.4Z M1732.0 283.1 L1737.2 283.5 L1738.1 282.0 L1732.7 280.2 L1729.1 281.1Z M1766.8 285.9 L1772.2 287.0 L1774.8 284.8 L1769.5 284.8Z M1683.6 347.1 L1687.1 346.8 L1686.7 349.2 L1683.6 347.9Z M1678.7 342.7 L1680.5 342.7 L1680.4 345.8 L1679.0 345.8Z M1679.0 339.7 L1680.0 339.7 L1680.0 342.1 L1679.3 342.0Z M1696.4 350.8 L1699.6 351.2 L1697.1 351.8Z M1706.5 351.5 L1708.9 350.6 L1707.4 352.1Z M1677.2 285.9 L1681.2 288.9 L1685.2 287.3 L1687.6 283.5 L1682.8 282.8 L1677.7 283.9Z"/>
<path fill="#2fb889" d="M1692.1 297.0 L1690.3 296.8 L1686.8 298.3 L1683.7 299.8 L1681.5 301.8 L1680.5 304.8 L1679.0 307.1 L1676.9 309.1 L1674.4 310.9 L1674.3 313.9 L1674.9 315.8 L1676.3 317.0 L1677.8 316.7 L1679.6 315.1 L1680.5 314.7 L1681.0 312.4 L1680.5 309.4 L1682.1 307.1 L1683.1 304.8 L1684.7 301.0 L1686.7 300.2 L1688.8 300.4 L1690.3 299.6 L1693.0 298.8 L1694.2 298.8Z M1693.2 323.6 L1694.1 325.9 L1693.3 326.2 L1695.2 326.6 L1700.8 326.5 L1701.6 325.0 L1701.8 323.4 L1700.0 320.4 L1697.6 319.7 L1695.7 320.5 L1695.1 322.4Z M1686.6 336.3 L1690.0 335.2 L1691.0 334.9 L1692.0 334.7 L1692.8 336.8 L1693.9 337.3 L1694.1 338.5 L1694.7 340.6 L1692.7 340.8 L1690.9 339.6 L1689.9 340.4 L1687.2 338.1Z M1743.0 365.8 L1744.2 362.7 L1743.1 361.0 L1740.7 358.7 L1747.3 358.4 L1749.7 356.1 L1750.4 354.2 L1749.3 352.1 L1750.7 351.1 L1750.6 348.7 L1753.6 347.0 L1757.1 349.2 L1754.1 350.9 L1755.4 353.7 L1756.6 354.4 L1755.6 356.5 L1753.7 361.1 L1752.2 362.3 L1753.3 365.1 L1751.9 367.0 L1751.1 367.9 L1748.6 365.4 L1745.7 365.6Z"/>
<path fill="#6ed19c" d="M1692.0 334.7 L1693.3 332.1 L1694.9 332.1 L1697.6 331.6 L1699.5 333.1 L1699.9 335.7 L1701.4 336.1 L1700.6 337.6 L1700.2 339.5 L1699.8 341.0 L1698.2 341.3 L1694.7 340.6 L1694.1 338.5 L1693.9 337.3 L1692.8 336.8Z M1692.2 344.9 L1693.9 347.9 L1695.1 349.4 L1695.5 347.4 L1696.6 346.8 L1695.1 344.9 L1695.7 343.6 L1698.4 342.8 L1698.2 341.5 L1694.9 342.1 L1692.9 342.9 L1691.9 344.5Z M1718.8 344.5 L1723.4 346.0 L1724.8 347.1 L1727.3 348.3 L1730.4 347.4 L1732.6 346.6 L1736.6 346.9 L1738.6 348.4 L1739.2 350.7 L1739.1 353.0 L1740.3 356.1 L1741.2 356.4 L1740.7 358.7 L1743.1 361.0 L1744.2 362.7 L1743.0 365.8 L1740.3 365.6 L1737.6 365.0 L1736.1 362.9 L1734.1 363.9 L1732.3 363.8 L1730.3 362.1 L1728.0 358.8 L1726.7 358.2 L1725.6 358.1 L1724.9 355.8 L1722.9 354.3 L1721.7 352.8 L1722.2 351.2 L1721.4 350.0 L1720.2 347.9Z M1814.8 374.1 L1817.6 373.9 L1818.2 377.3 L1817.7 379.0 L1821.3 381.4 L1821.4 383.4 L1817.2 381.8 L1816.5 379.0 L1815.4 377.7Z M1820.5 393.2 L1820.9 391.2 L1824.2 388.4 L1825.9 392.2 L1825.5 394.4 L1823.0 394.3Z M1819.7 386.5 L1822.3 388.1 L1823.8 385.5 L1821.7 383.9Z"/>
<path fill="#ec6b1e" d="M1686.8 333.9 L1687.7 332.0 L1689.4 332.2 L1691.7 331.2 L1693.3 332.1 L1692.0 334.7 L1691.0 334.9 L1690.0 335.2 L1688.4 335.2Z M1678.3 321.7 L1680.3 320.7 L1679.7 317.4 L1677.6 318.5 L1678.0 320.9Z M1659.5 346.2 L1659.5 348.8 L1661.1 348.5 L1661.8 345.8 L1661.8 344.3 L1662.1 341.2 L1659.9 341.2 L1659.9 342.0 L1659.6 344.3 L1659.0 346.1Z M1663.5 325.8 L1663.4 323.2 L1664.0 322.1 L1662.7 321.1 L1661.1 322.1 L1659.6 323.0 L1659.4 326.0 L1660.9 326.7Z M1710.6 352.2 L1710.4 348.9 L1711.5 348.9 L1717.6 347.8 L1714.8 355.7 L1715.1 356.0 L1712.6 356.8 L1715.2 359.0 L1710.6 359.9 L1709.5 357.1 L1710.0 354.5Z M1710.6 359.9 L1715.2 359.0 L1712.6 356.8 L1715.1 356.0 L1718.5 357.4 L1721.8 360.1 L1725.2 359.1 L1725.8 359.6 L1727.4 362.6 L1729.2 364.9 L1730.2 366.9 L1730.9 365.9 L1731.7 367.9 L1736.2 369.9 L1736.1 374.0 L1732.6 375.6 L1729.1 376.3 L1726.9 378.8 L1723.2 378.4 L1722.3 379.3 L1721.8 381.9 L1720.2 378.9 L1718.0 374.3 L1716.5 371.3 L1715.0 368.2 L1713.0 365.2Z M1751.3 343.4 L1751.5 342.4 L1753.5 341.5 L1755.2 340.3 L1756.8 337.7 L1755.1 334.3 L1757.4 333.4 L1756.9 331.1 L1759.5 330.9 L1759.4 327.4 L1760.3 327.5 L1760.9 328.3 L1764.6 330.5 L1766.2 333.2 L1768.7 333.5 L1771.6 334.4 L1773.9 336.8 L1778.9 336.6 L1783.9 337.8 L1785.2 336.2 L1789.0 335.1 L1788.9 334.0 L1789.9 331.1 L1792.3 329.2 L1794.3 328.5 L1791.4 327.1 L1788.8 326.9 L1788.1 324.0 L1789.5 324.3 L1789.4 321.0 L1788.2 318.2 L1790.2 317.6 L1797.7 322.6 L1801.7 323.8 L1804.2 325.7 L1805.5 324.7 L1807.3 324.3 L1809.8 329.6 L1807.5 330.2 L1809.8 333.0 L1809.5 333.9 L1807.4 335.0 L1806.1 338.2 L1805.6 338.7 L1803.7 338.8 L1803.3 340.8 L1803.2 338.5 L1801.9 337.6 L1800.4 339.9 L1799.2 340.8 L1800.4 342.1 L1802.3 343.6 L1804.0 342.4 L1806.1 343.2 L1804.5 344.6 L1804.3 347.1 L1806.5 348.6 L1808.5 351.8 L1811.0 355.0 L1811.4 357.5 L1810.6 360.0 L1810.6 363.4 L1808.7 367.0 L1805.4 368.2 L1803.4 369.6 L1802.7 371.6 L1801.7 370.2 L1799.2 369.8 L1797.2 367.7 L1795.0 367.2 L1792.2 368.0 L1791.9 370.6 L1789.7 370.2 L1788.3 369.1 L1786.8 365.4 L1785.8 366.3 L1784.9 363.1 L1785.5 360.6 L1783.7 359.6 L1781.2 358.4 L1779.7 359.3 L1777.7 360.5 L1774.4 361.1 L1773.0 360.6 L1770.7 360.5 L1768.0 359.5 L1763.9 357.3 L1761.3 356.1 L1760.3 353.8 L1760.1 349.9 L1758.0 349.2 L1754.1 347.0 L1753.1 345.5Z M1751.1 367.9 L1751.9 367.0 L1753.3 365.1 L1752.2 362.3 L1753.7 361.1 L1755.6 356.5 L1756.6 354.4 L1755.4 353.7 L1754.1 350.9 L1757.1 349.2 L1758.0 349.2 L1760.1 349.9 L1760.3 353.8 L1761.3 356.1 L1763.9 357.3 L1768.0 359.5 L1770.7 360.5 L1773.0 360.6 L1774.4 361.1 L1777.7 360.5 L1779.7 359.3 L1781.2 358.4 L1783.7 359.6 L1782.7 361.6 L1782.2 363.2 L1782.0 365.6 L1781.2 368.1 L1780.4 368.9 L1780.7 371.3 L1779.2 369.0 L1777.6 370.0 L1775.8 369.9 L1774.2 370.7 L1774.3 372.3 L1772.4 374.3 L1771.0 376.4 L1768.9 378.8 L1767.5 380.4 L1768.0 383.6 L1767.8 386.8 L1767.3 388.7 L1766.1 390.9 L1765.4 392.2 L1764.0 390.9 L1762.8 387.6 L1760.9 383.7 L1759.3 379.8 L1757.8 375.1 L1757.0 371.4 L1754.3 372.1 L1752.5 370.3 L1753.6 369.8 L1751.6 368.6Z M1791.2 388.8 L1791.1 392.0 L1791.4 392.8 L1793.8 395.2 L1795.2 393.9 L1793.5 391.2 L1791.9 389.6 L1791.9 385.5 L1792.4 383.1 L1793.5 384.3 L1795.5 385.4 L1795.7 382.2 L1798.0 381.6 L1798.2 378.8 L1796.4 375.9 L1794.5 375.7 L1792.3 376.6 L1791.0 373.4 L1790.2 372.1 L1787.9 373.0 L1788.4 376.7 L1789.7 379.1 L1790.8 382.3 L1791.5 385.5Z M1799.2 390.7 L1800.9 389.4 L1801.4 387.7 L1803.6 386.1 L1803.5 382.8 L1802.3 379.5 L1798.9 376.3 L1797.4 373.9 L1798.1 371.5 L1799.2 369.8 L1797.2 367.7 L1795.0 367.2 L1792.2 368.0 L1791.8 368.8 L1795.0 372.4 L1796.8 374.8 L1800.0 378.8 L1801.0 381.2 L1800.4 385.3 L1800.1 387.8Z M1805.6 338.7 L1808.3 341.7 L1810.1 342.4 L1812.0 346.4 L1813.7 347.0 L1815.0 345.7 L1814.2 343.7 L1811.6 341.0 L1809.4 339.1 L1810.3 336.4 L1809.9 334.2 L1807.4 335.0 L1806.1 338.2Z M1793.8 395.2 L1794.6 398.4 L1795.5 400.9 L1798.0 402.8 L1798.9 402.5 L1797.9 398.4 L1797.2 396.0 L1795.8 394.9 L1795.2 393.9Z M1768.0 389.4 L1770.9 393.1 L1770.2 395.1 L1768.6 395.5 L1768.2 392.3Z M1817.5 349.4 L1820.4 352.5 L1820.3 350.0 L1822.2 348.1 L1822.5 346.3 L1824.1 346.2 L1826.0 345.4 L1827.0 343.8 L1825.5 340.8 L1824.2 337.1 L1821.8 334.4 L1821.3 336.0 L1822.7 338.5 L1822.5 340.6 L1821.2 341.6 L1821.9 344.3 L1818.9 344.9 L1817.6 346.8Z M1820.2 334.4 L1820.5 332.6 L1822.9 333.2 L1823.5 330.8 L1821.7 329.8 L1817.4 327.8 L1817.6 328.6 L1818.4 331.5Z M1812.9 366.6 L1814.5 368.4 L1814.1 363.2 L1813.3 362.7 L1812.5 364.6Z M1800.9 373.5 L1802.8 372.1 L1803.6 372.9 L1802.9 375.0 L1801.2 374.6Z M1787.5 395.9 L1790.4 396.5 L1794.0 400.9 L1799.3 407.4 L1801.1 409.8 L1800.6 414.4 L1799.0 414.4 L1796.0 411.4 L1794.3 407.4 L1792.2 402.2 L1789.9 399.3Z M1799.7 416.1 L1800.8 414.6 L1803.8 415.6 L1806.3 416.3 L1808.8 416.2 L1811.1 417.7 L1810.9 419.4 L1806.7 418.5 L1803.1 417.7 L1801.3 417.1Z M1811.6 418.5 L1816.5 419.0 L1821.5 418.7 L1826.4 418.7 L1823.6 421.5 L1816.4 420.0 L1811.5 419.7Z M1804.8 402.5 L1805.6 401.6 L1807.9 400.8 L1809.7 399.6 L1812.7 396.3 L1814.3 393.3 L1817.2 396.2 L1815.9 397.9 L1815.6 401.6 L1817.0 403.3 L1815.4 404.9 L1814.2 407.4 L1814.0 410.8 L1811.5 411.6 L1807.3 409.9 L1806.1 407.4 L1804.9 404.9Z M1817.6 414.1 L1817.1 410.8 L1818.5 404.1 L1819.7 402.8 L1824.1 402.4 L1821.0 404.1 L1819.7 406.6 L1822.2 406.6 L1820.3 408.3 L1820.8 412.5 L1819.6 411.7 L1819.1 409.1 L1818.6 414.2Z M1827.8 401.5 L1829.1 403.2 L1828.4 406.3 L1827.6 404.9Z M1832.1 407.2 L1835.9 406.5 L1840.2 407.5 L1844.5 409.5 L1849.9 412.9 L1852.1 415.6 L1852.1 419.1 L1854.7 423.7 L1851.8 422.7 L1849.9 419.1 L1846.5 420.7 L1843.4 420.8 L1841.2 418.8 L1839.7 419.5 L1840.9 416.2 L1836.9 412.7 L1834.2 411.8 L1833.3 409.7 L1835.2 408.9 L1833.4 408.4Z"/>
<path fill="#fedc1d" d="M1795.5 385.4 L1796.3 387.0 L1798.3 387.8 L1799.2 390.7 L1800.1 387.8 L1800.4 385.3 L1801.0 381.2 L1800.0 378.8 L1796.8 374.8 L1795.0 372.4 L1791.8 368.8 L1791.9 370.6 L1790.2 372.1 L1791.0 373.4 L1792.3 376.6 L1794.5 375.7 L1796.4 375.9 L1798.2 378.8 L1798.0 381.6 L1795.7 382.2Z"/>
<path fill="#545358" d="M1714.8 355.7 L1717.6 347.8 L1720.2 347.9 L1721.4 350.0 L1722.2 351.2 L1721.7 352.8 L1722.9 354.3 L1724.9 355.8 L1725.6 358.1 L1725.2 359.1 L1721.8 360.1 L1718.5 357.4 L1715.1 356.0Z M1721.8 381.9 L1722.6 385.0 L1724.3 385.4 L1725.4 384.7 L1728.4 383.4 L1730.8 381.8 L1733.1 380.3 L1735.4 378.7 L1737.1 377.4 L1738.5 376.0 L1739.4 373.2 L1741.1 370.4 L1739.6 368.4 L1737.7 367.8 L1736.5 365.5 L1736.4 367.1 L1736.2 369.9 L1736.1 374.0 L1732.6 375.6 L1729.1 376.3 L1726.9 378.8 L1723.2 378.4 L1722.3 379.3Z M1739.1 353.0 L1739.2 350.7 L1738.6 348.4 L1740.7 349.9 L1742.7 348.6 L1744.5 346.8 L1746.3 347.3 L1747.9 344.9 L1749.8 345.8 L1750.4 347.9 L1753.6 347.0 L1750.6 348.7 L1750.7 351.1 L1749.3 352.1 L1750.4 354.2 L1749.7 356.1 L1747.3 358.4 L1740.7 358.7 L1741.2 356.4 L1740.3 356.1Z M1720.5 335.1 L1719.2 332.1 L1720.6 331.3 L1718.4 329.0 L1719.0 327.5 L1721.6 325.9 L1726.0 326.8 L1728.9 326.0 L1730.6 325.0 L1731.7 323.9 L1730.3 321.6 L1733.9 320.7 L1737.3 319.2 L1742.2 321.3 L1745.2 320.3 L1746.8 321.5 L1751.1 325.1 L1754.0 324.9 L1757.2 327.1 L1759.4 327.4 L1759.5 330.9 L1756.9 331.1 L1757.4 333.4 L1755.1 334.3 L1756.8 337.7 L1755.2 340.3 L1753.5 341.5 L1751.5 342.4 L1751.3 343.4 L1754.0 346.7 L1749.8 345.8 L1747.9 344.9 L1746.3 347.3 L1744.5 346.8 L1742.7 348.6 L1740.7 349.9 L1738.6 348.4 L1736.6 346.9 L1732.6 346.6 L1730.4 347.4 L1728.7 344.4 L1729.4 342.5 L1727.7 341.0 L1725.5 338.8 L1724.6 336.5 L1726.5 335.7 L1725.9 333.4 L1724.1 332.7 L1721.7 333.5Z M1760.3 327.5 L1761.5 325.5 L1763.2 324.7 L1767.9 322.3 L1769.3 323.8 L1773.3 324.4 L1775.3 324.4 L1779.0 325.4 L1780.7 325.5 L1782.2 325.5 L1785.6 323.6 L1788.1 324.0 L1788.8 326.9 L1791.4 327.1 L1794.3 328.5 L1792.3 329.2 L1789.9 331.1 L1788.9 334.0 L1789.0 335.1 L1785.2 336.2 L1783.9 337.8 L1778.9 336.6 L1773.9 336.8 L1771.6 334.4 L1768.7 333.5 L1766.2 333.2 L1764.6 330.5 L1760.9 328.3Z M1780.7 371.3 L1782.0 373.7 L1784.3 377.6 L1784.8 379.2 L1786.1 379.5 L1788.3 378.3 L1789.0 380.7 L1790.4 383.9 L1791.2 388.8 L1791.5 385.5 L1790.8 382.3 L1789.7 379.1 L1788.4 376.7 L1787.9 373.0 L1790.2 372.1 L1791.9 370.6 L1789.7 370.2 L1788.3 369.1 L1786.8 365.4 L1785.8 366.3 L1784.9 363.1 L1785.5 360.6 L1783.7 359.6 L1782.7 361.6 L1782.2 363.2 L1782.0 365.6 L1781.2 368.1 L1780.4 368.9Z M1707.6 358.9 L1707.2 357.2 L1705.6 356.8 L1703.4 357.9 L1698.6 356.7 L1696.2 355.4 L1693.9 354.9 L1692.9 357.1 L1691.8 358.9 L1687.6 357.1 L1684.6 355.0 L1682.3 354.6 L1681.3 352.9 L1682.2 351.1 L1681.5 349.1 L1679.8 348.4 L1677.0 348.8 L1673.0 349.1 L1668.5 351.1 L1667.3 351.7 L1662.9 350.6 L1661.8 353.4 L1658.5 355.6 L1658.1 360.2 L1654.8 363.2 L1652.4 365.5 L1649.8 370.0 L1649.1 373.0 L1649.9 375.3 L1649.5 379.9 L1648.2 382.6 L1649.0 385.2 L1649.1 386.3 L1650.5 387.5 L1651.7 389.0 L1653.2 390.5 L1654.2 393.1 L1656.0 394.6 L1658.5 397.4 L1660.3 398.3 L1663.4 397.2 L1667.1 397.7 L1670.8 396.0 L1673.3 395.4 L1675.8 396.1 L1677.0 398.4 L1678.9 398.1 L1680.8 399.0 L1681.8 401.1 L1681.4 403.4 L1681.0 406.2 L1683.9 410.3 L1684.5 413.3 L1685.7 417.8 L1686.2 421.6 L1684.9 425.4 L1684.0 430.7 L1685.3 435.3 L1687.0 439.9 L1687.6 445.9 L1689.0 448.4 L1690.7 453.3 L1690.8 456.6 L1692.5 457.8 L1695.5 456.6 L1699.0 456.7 L1701.3 455.5 L1704.5 452.7 L1706.6 449.2 L1707.9 448.4 L1708.6 444.6 L1712.0 441.6 L1712.3 438.6 L1711.9 435.5 L1713.9 433.7 L1717.8 430.2 L1719.4 427.2 L1719.5 421.0 L1718.2 417.2 L1718.1 414.9 L1717.7 412.6 L1719.5 409.1 L1721.1 407.5 L1723.0 404.2 L1725.4 402.0 L1727.9 399.6 L1730.3 395.7 L1732.5 389.5 L1732.8 388.9 L1732.6 386.7 L1730.5 387.5 L1728.7 387.9 L1725.1 389.0 L1723.1 387.3 L1722.8 385.8 L1721.1 383.0 L1718.5 380.7 L1717.1 378.9 L1715.7 376.6 L1714.7 373.6 L1714.1 371.3 L1712.4 369.0 L1710.6 365.2 L1709.2 363.0 L1707.8 359.5Z M1730.2 423.4 L1731.3 428.8 L1730.3 431.1 L1728.6 435.7 L1726.4 441.8 L1723.3 444.2 L1721.9 441.0 L1722.0 437.9 L1723.4 434.9 L1723.4 431.0 L1726.4 429.2 L1728.5 425.7Z M1844.5 409.5 L1849.9 412.9 L1852.1 415.6 L1852.1 419.1 L1854.7 423.7 L1851.8 422.7 L1849.9 419.1 L1846.5 420.7 L1843.4 420.8Z M1853.4 414.7 L1858.0 412.5 L1858.5 413.9 L1855.2 416.2Z"/>
<path fill="#de1629" d="M1662.9 350.6 L1667.1 351.7 L1667.7 353.4 L1667.9 355.7 L1665.5 357.2 L1663.8 359.4 L1659.4 361.4 L1659.3 363.5 L1659.3 365.5 L1655.4 365.5 L1655.2 369.3 L1653.9 372.6 L1649.1 372.6 L1649.8 370.0 L1652.4 365.5 L1654.8 363.2 L1658.1 360.2 L1658.5 355.6 L1661.8 353.4Z M1698.6 356.7 L1703.4 357.9 L1705.6 356.8 L1707.2 357.2 L1707.6 358.9 L1707.8 359.5 L1709.2 363.0 L1710.6 365.2 L1712.4 369.0 L1714.0 371.3 L1699.7 371.5Z M1665.6 397.2 L1666.1 393.6 L1666.4 388.3 L1669.5 388.1 L1670.2 389.8 L1670.2 393.6 L1671.1 395.7 L1668.4 397.2Z M1696.6 424.7 L1696.4 430.0 L1698.2 432.3 L1700.4 432.0 L1702.4 432.1 L1704.8 429.3 L1706.8 428.7 L1706.6 427.1 L1710.1 426.3 L1710.6 421.0 L1707.9 418.1 L1705.2 417.9 L1704.9 420.9 L1705.9 423.5 L1704.0 424.0 L1702.2 422.5 L1699.2 421.7 L1699.1 424.7Z"/>
<path fill="#ec6b1e" d="M1673.0 395.2 L1672.9 391.3 L1674.0 387.2 L1674.5 384.5 L1678.2 385.2 L1681.9 384.8 L1685.0 385.1 L1686.4 384.4 L1687.4 386.7 L1685.7 390.5 L1684.7 392.0 L1683.2 394.8 L1681.4 395.1 L1680.1 398.0 L1677.0 398.4 L1675.8 396.1 L1673.3 395.4Z M1689.0 448.4 L1690.7 453.3 L1690.8 456.6 L1692.5 457.8 L1695.5 456.6 L1699.0 456.7 L1701.3 455.5 L1704.5 452.7 L1706.6 449.2 L1707.9 448.4 L1708.5 445.8 L1707.5 444.5 L1707.2 439.1 L1705.0 438.6 L1701.9 440.7 L1700.0 443.8 L1697.0 443.4 L1693.5 442.6 L1693.2 448.1 L1690.2 448.5Z"/>
<path fill="#de1629" d="M1805.6 441.2 L1803.9 448.6 L1803.0 454.4 L1800.4 460.8 L1802.4 462.6 L1805.9 461.2 L1809.3 461.3 L1813.8 459.0 L1817.7 458.1 L1820.0 458.2 L1822.3 460.6 L1822.0 464.4 L1825.9 461.3 L1824.0 465.5 L1825.5 466.1 L1824.4 469.9 L1826.7 471.5 L1829.2 472.4 L1832.4 470.5 L1834.8 470.2 L1838.8 465.3 L1843.2 461.4 L1847.5 455.5 L1849.8 449.4 L1849.0 445.7 L1847.9 443.8 L1847.1 439.3 L1846.4 435.7 L1846.7 431.3 L1845.5 429.5 L1845.7 426.0 L1844.9 423.7 L1843.1 426.8 L1842.1 431.1 L1840.6 434.5 L1839.2 435.3 L1837.3 433.5 L1834.9 430.8 L1836.6 428.2 L1837.5 425.7 L1835.3 425.6 L1832.4 424.6 L1830.3 425.8 L1827.8 429.6 L1825.8 430.4 L1824.3 428.6 L1822.1 430.2 L1819.8 432.7 L1818.0 435.1 L1815.6 437.5 L1812.3 438.7 L1809.7 439.1 L1806.8 441.0Z M1825.8 474.8 L1829.2 475.6 L1827.6 477.7 L1824.6 479.7 L1824.5 477.8Z M1861.7 468.3 L1862.1 470.5 L1860.9 474.2 L1863.0 475.0 L1859.8 477.5 L1855.4 480.6 L1854.2 480.3 L1857.1 477.4 L1856.4 476.7 L1860.1 473.1 L1861.0 469.8Z M1853.5 478.6 L1853.2 480.9 L1848.8 484.1 L1845.1 485.7 L1840.8 487.9 L1839.5 486.5 L1841.5 485.0 L1847.7 482.4 L1851.3 480.2Z"/>
<path fill="#353535" d="M1720.1 335.9 L1721.7 333.5 L1724.1 332.7 L1725.9 333.4 L1726.5 335.7 L1724.6 336.5 L1725.5 338.8 L1727.7 341.0 L1729.4 342.5 L1728.7 344.4 L1730.4 347.4 L1727.3 348.3 L1724.8 347.3 L1724.5 343.2 L1721.5 339.2Z"/></g>
</svg><!--MAPS_END-->
</body></html>
